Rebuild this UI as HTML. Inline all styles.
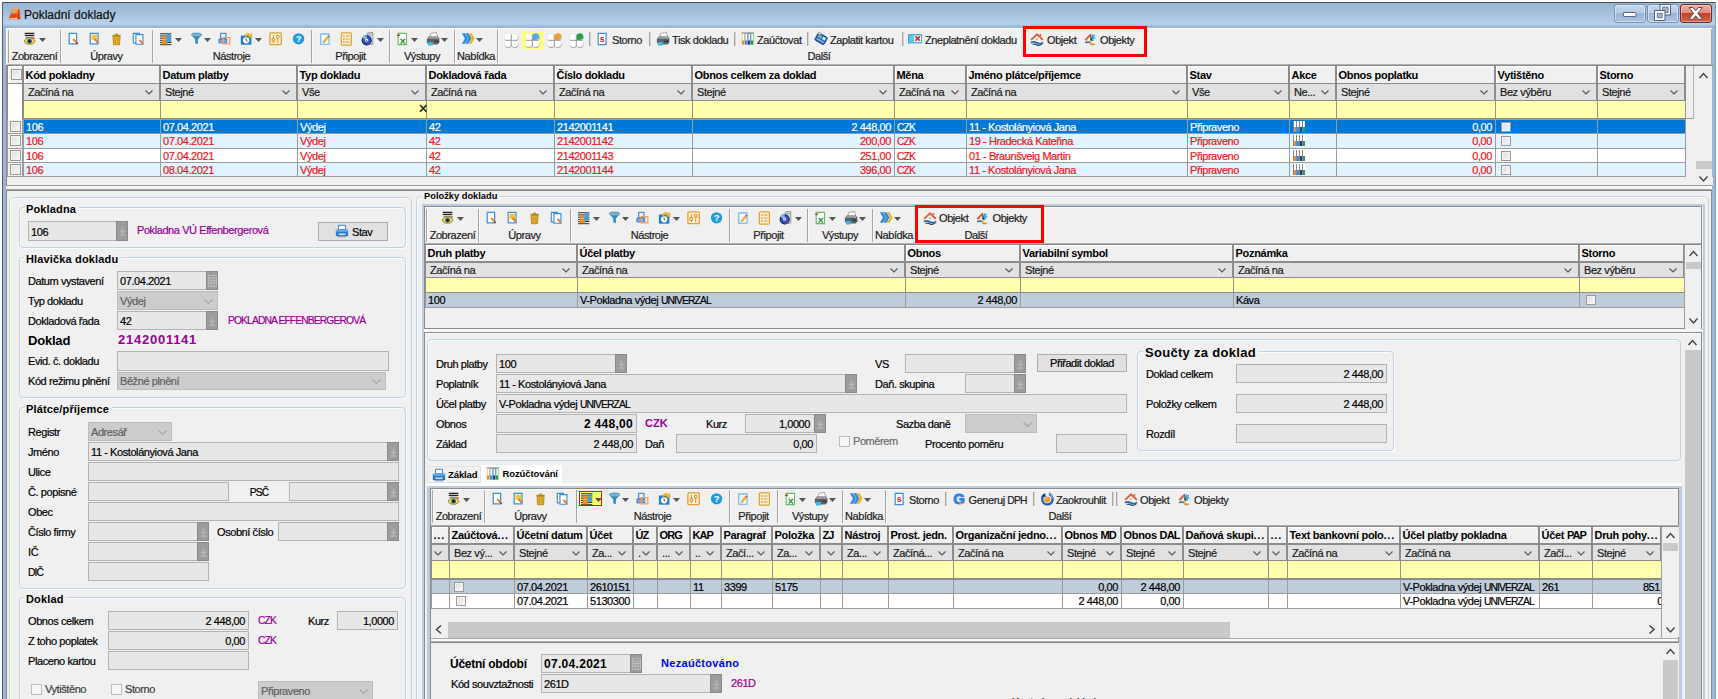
<!DOCTYPE html>
<html lang="cs"><head><meta charset="utf-8"><title>Pokladní doklady</title>
<style>
html,body{margin:0;padding:0;background:#fff;}
body{width:1718px;height:699px;overflow:hidden;position:relative;font-family:"Liberation Sans","DejaVu Sans",sans-serif;font-size:11px;color:#000;}
#win{position:absolute;left:0;top:0;width:1718px;height:699px;overflow:hidden;}
#win div{position:absolute;box-sizing:border-box;white-space:nowrap;}
#win svg{position:absolute;overflow:visible;}
.t{font-size:11px;letter-spacing:-0.42px;color:#000;-webkit-text-stroke:0.2px;}
.b{font-size:11px;font-weight:bold;letter-spacing:-0.3px;color:#000;}
.fld{background:#e6e6e6;border:1px solid #b4b4b4;}
.hd{background:#f0f0f0;}

</style></head><body>
<div id="win">
<div style="left:2px;top:2px;width:1714px;height:700px;background:#9ab5d5;"></div>
<div style="left:2px;top:2px;width:1714px;height:26px;background:linear-gradient(#98b4d1 0%,#a3bedb 40%,#b9d1ea 80%,#b5cee8 86%,#9ab5d5 94%);"></div>
<div style="left:2px;top:2px;width:1714px;height:1px;background:#4a4f55;"></div>
<div style="left:2px;top:2px;width:1px;height:700px;background:#5a6068;"></div>
<div style="left:1715px;top:2px;width:1px;height:700px;background:#8a9db2;"></div>
<svg style="left:8.5px;top:7.5px" width="12" height="12" viewBox="0 0 12 12"><linearGradient id="tg" x1="0" y1="0" x2="0" y2="1"><stop offset="0" stop-color="#f6a860"/><stop offset=".55" stop-color="#f58a3a"/><stop offset="1" stop-color="#ee4a18"/></linearGradient><path d="M3.300 .300h6l1 1.200v5.500h-8.500v-3.500z" fill="url(#tg)"/><path d="M2.600 3.200l4.200-.800.300 1.600-4.300.900z" fill="#a9c4ac"/><path d="M.300 8.800l1.500-2.300h8.500l1 2.500-.300 2.300h-10.400z" fill="#e6431a"/><path d="M1.500 9.800l3 .800 3.500-1.300v2h-6.500z" fill="#f8dfa0"/><path d="M8.800 1l1.800.800.700 9-2 .500z" fill="#cf3c1c" opacity=".85"/></svg>
<div class="t" style="left:24px;top:7px;line-height:16px;height:16px;font-size:12px;letter-spacing:0;color:#101010;">Pokladní doklady</div>
<div style="left:1614px;top:4px;width:32px;height:19px;border:1px solid #7e93ad;border-radius:3px;background:linear-gradient(#c4d8ee 0%,#b4cbe6 48%,#9bb7d6 50%,#a9c3e0 100%);box-shadow:inset 0 0 0 1px rgba(255,255,255,.45);"></div>
<div style="left:1647px;top:4px;width:32px;height:19px;border:1px solid #7e93ad;border-radius:3px;background:linear-gradient(#c4d8ee 0%,#b4cbe6 48%,#9bb7d6 50%,#a9c3e0 100%);box-shadow:inset 0 0 0 1px rgba(255,255,255,.45);"></div>
<div style="left:1680px;top:4px;width:32px;height:19px;border:1px solid #6e2a2a;border-radius:3px;background:linear-gradient(#f0aa9c 0%,#e08c7c 48%,#c0412a 50%,#d0664c 100%);box-shadow:inset 0 0 0 1px rgba(255,255,255,.35);"></div>
<svg style="left:1623px;top:12px" width="14" height="5" viewBox="0 0 14 5"><rect x=".5" y=".5" width="12.500" height="4" rx=".5" fill="#fff" stroke="#5a6a80" stroke-width="1"/></svg>
<svg style="left:1653px;top:3px" width="20" height="19" viewBox="0 0 20 19"><path d="M7 1.500h10.500v10.500h-10.500z" fill="#fff" stroke="#52617a" stroke-width="1"/><path d="M9.500 4h5.500v5.500h-5.500z" fill="#9db9d8" stroke="#52617a" stroke-width=".8"/><path d="M1.500 7.500h10.500v10h-10.500z" fill="#fff" stroke="#52617a" stroke-width="1"/><path d="M4.300 10.300h4.900v4.400h-4.900z" fill="#9db9d8" stroke="#52617a" stroke-width=".8"/></svg>
<svg style="left:1688px;top:6px" width="16" height="15" viewBox="0 0 16 15"><path d="M1 1.500h4l2.700 3.300 2.700-3.300h4l-4.600 5.800 4.600 5.900h-4l-2.700-3.400-2.700 3.400h-4l4.600-5.900z" fill="#fff" stroke="#6a4a50" stroke-width="1" stroke-linejoin="round"/></svg>
<div style="left:6px;top:28px;width:1706px;height:672px;background:#f0f0f0;"></div>
<div style="left:6px;top:28px;width:1px;height:672px;background:#fafafa;"></div>
<div style="left:6px;top:28px;width:1706px;height:1px;background:#fbfbfb;"></div>
<div style="left:8px;top:30px;width:1px;height:33px;background:#a5a5a5;"></div>
<div style="left:9px;top:30px;width:1px;height:33px;background:#fafafa;"></div>
<svg style="left:23px;top:32px" width="14" height="14" viewBox="0 0 16 16"><path d="M2 1.5h11M2 3.8h11" stroke="#222" stroke-width="1.3"/><path d="M3 6h9" stroke="#555" stroke-width="1"/><ellipse cx="7.5" cy="10.5" rx="6" ry="3.6" fill="#e9d36a" stroke="#9a7d1c" stroke-width="1"/><circle cx="7.5" cy="10.6" r="2.6" fill="#1d4f7a"/><circle cx="7.5" cy="10.6" r="1.1" fill="#0a1a28"/><path d="M11.5 7.5l2-1" stroke="#b33" stroke-width="1.2"/></svg>
<svg style="left:39px;top:38px" width="7" height="4" viewBox="0 0 7 4"><path d="M0 0h7L3.5 4z" fill="#555"/></svg>
<div class="t" style="left:-15.5px;top:49px;line-height:14px;height:14px;width:100px;text-align:center;color:#1c1c1c;">Zobrazení</div>
<div style="left:60px;top:30px;width:1px;height:33px;background:#a5a5a5;"></div>
<div style="left:61px;top:30px;width:1px;height:33px;background:#fafafa;"></div>
<svg style="left:67px;top:32px" width="14" height="14" viewBox="0 0 16 16"><path d="M2.5 1.5h8.5v12h-8.5z" fill="#fff" stroke="#3b8fd6" stroke-width="1.4"/><path d="M7 8l4.5 4.8" stroke="#e8742a" stroke-width="2"/><path d="M10.8 12l1.4 1.6" stroke="#8a3a10" stroke-width="1.6"/></svg>
<svg style="left:87.5px;top:32px" width="14" height="14" viewBox="0 0 16 16"><path d="M2.5 1.5h9v12h-9z" fill="#fff" stroke="#3b8fd6" stroke-width="1.4"/><path d="M4 3h6.5v6h-6.5z" fill="#f6c433"/><path d="M7.5 8l4 4.5" stroke="#e8742a" stroke-width="2.2"/></svg>
<svg style="left:110px;top:32px" width="14" height="14" viewBox="0 0 16 16"><path d="M3.5 5h8l-.6 9.5h-6.8z" fill="#e3ae2d" stroke="#b58417" stroke-width="1"/><path d="M2.8 4h9.4" stroke="#b58417" stroke-width="1.6"/><path d="M6 2.5h3" stroke="#b58417" stroke-width="1.4"/><path d="M6 7v6M9 7v6" stroke="#c6931f" stroke-width="1"/></svg>
<svg style="left:132px;top:32px" width="14" height="14" viewBox="0 0 16 16"><path d="M1.5 1.5h7v11h-7z" fill="#fff" stroke="#3b8fd6" stroke-width="1.3"/><path d="M4.5 3h8v11h-8z" fill="#fff" stroke="#3b8fd6" stroke-width="1.3"/><path d="M8.5 9l4 4.6" stroke="#e8742a" stroke-width="2"/></svg>
<div class="t" style="left:56.5px;top:49px;line-height:14px;height:14px;width:100px;text-align:center;color:#1c1c1c;">Úpravy</div>
<div style="left:152px;top:30px;width:1px;height:33px;background:#a5a5a5;"></div>
<div style="left:153px;top:30px;width:1px;height:33px;background:#fafafa;"></div>
<svg style="left:160px;top:32px" width="14" height="14" viewBox="0 0 16 16"><path d="M0 2h13M0 4.5h13M0 7h13M0 9.5h13M0 12h13M0 14.5h13" stroke="#222" stroke-width="1.1"/><circle cx="5" cy="6.5" r="2" fill="#f28c28"/><path d="M1.5 14c0-4 1.5-5.5 3.5-5.5s3.5 1.5 3.5 5.5z" fill="#f28c28"/><circle cx="10" cy="3.2" r="1.9" fill="#3aa0e0"/><path d="M7.2 11c0-4 1.2-5.6 2.8-5.6s2.8 1.6 2.8 5.600z" fill="#3aa0e0"/></svg>
<svg style="left:175px;top:38px" width="7" height="4" viewBox="0 0 7 4"><path d="M0 0h7L3.5 4z" fill="#555"/></svg>
<svg style="left:190px;top:32px" width="14" height="14" viewBox="0 0 16 16"><path d="M1.500 3h12l-4.500 5.500v5.500l-3-1.200v-4.300z" fill="#2f8ad1"/><ellipse cx="7.500" cy="3" rx="6" ry="1.800" fill="#6db8ea" stroke="#2a78b8" stroke-width=".8"/><path d="M3 3.800c3 1 6 1 9 0" stroke="#e8c040" stroke-width=".8" fill="none"/></svg>
<svg style="left:204px;top:38px" width="7" height="4" viewBox="0 0 7 4"><path d="M0 0h7L3.5 4z" fill="#555"/></svg>
<svg style="left:218px;top:32px" width="14" height="14" viewBox="0 0 16 16"><path d="M3 1.500h6v6h-6z" fill="none" stroke="#5b8fd0" stroke-width="1.5"/><path d="M1 8h9v4.500h-9z" fill="#7fa6dc" stroke="#4a78ba" stroke-width="1"/><path d="M6 6.500h7.500v7h-7.500z" fill="none" stroke="#f0a060" stroke-width="1.500"/></svg>
<svg style="left:240px;top:32px" width="14" height="14" viewBox="0 0 16 16"><path d="M1 4h12v10.500h-12z" fill="#1f7fd0"/><circle cx="7" cy="9.500" r="3.600" fill="#fff"/><path d="M7 7.500v2.200l1.600 1" stroke="#333" stroke-width="1" fill="none"/><path d="M5 4.500c1-3 5-4 7-1.500l1.500-1v4.500h-4.500l1.500-1.500c-1.500-1.500-3.500-1-4 1z" fill="#f5b921" stroke="#c98a10" stroke-width=".5"/></svg>
<svg style="left:255px;top:38px" width="7" height="4" viewBox="0 0 7 4"><path d="M0 0h7L3.5 4z" fill="#555"/></svg>
<svg style="left:269px;top:32px" width="14" height="14" viewBox="0 0 16 16"><rect x="1" y="1" width="13" height="13.500" rx="1.500" fill="#fdf3dc" stroke="#e0a030" stroke-width="1.500"/><path d="M5 3.500v9M10 3.500v9" stroke="#d8952a" stroke-width="1.200"/><circle cx="5" cy="9" r="1.700" fill="#fdf3dc" stroke="#d8952a" stroke-width="1.200"/><circle cx="10" cy="5.500" r="1.700" fill="#fdf3dc" stroke="#d8952a" stroke-width="1.200"/></svg>
<svg style="left:292px;top:32px" width="14" height="14" viewBox="0 0 16 16"><circle cx="7.500" cy="7.800" r="6.500" fill="#1e9be0"/><text x="7.500" y="11.600" font-size="11" font-weight="bold" text-anchor="middle" fill="#fff" font-family="Liberation Sans,sans-serif">?</text></svg>
<div class="t" style="left:181.5px;top:49px;line-height:14px;height:14px;width:100px;text-align:center;color:#1c1c1c;">Nástroje</div>
<div style="left:311px;top:30px;width:1px;height:33px;background:#a5a5a5;"></div>
<div style="left:312px;top:30px;width:1px;height:33px;background:#fafafa;"></div>
<svg style="left:319px;top:32px" width="14" height="14" viewBox="0 0 16 16"><path d="M2 2h9.500v12h-9.500z" fill="#f4f9ff" stroke="#6fb0ea" stroke-width="1.300"/><path d="M2 2.500h9.500" stroke="#9cc8f0" stroke-width="1.500"/><path d="M5 10.500l5-6 1.500 1.200-5 6-2 .8z" fill="#f3b13a" stroke="#c6831a" stroke-width=".5"/><path d="M10 4.500l1.500 1.200" stroke="#d8452a" stroke-width="1.500"/></svg>
<svg style="left:340px;top:32px" width="14" height="14" viewBox="0 0 16 16"><rect x="1.500" y="1" width="11.500" height="14" rx="1.200" fill="#fdf3dc" stroke="#e0a030" stroke-width="1.400"/><path d="M6.500 4.500h4.500M6.500 8h4.500M6.500 11.500h4.500" stroke="#d8952a" stroke-width="1.200"/><path d="M3.500 4.500h1.800M3.500 8h1.800M3.500 11.500h1.800" stroke="#d8952a" stroke-width="1.600"/></svg>
<svg style="left:361px;top:32px" width="14" height="14" viewBox="0 0 16 16"><path d="M7 1.500l2.500-1h4v13.500h-6.500z" fill="#d9d9d9" stroke="#8a8a8a" stroke-width=".9"/><path d="M9.500 .500v2.500h4" fill="none" stroke="#8a8a8a" stroke-width=".7"/><circle cx="6.500" cy="9.500" r="5.800" fill="#14286e"/><circle cx="6.500" cy="9.500" r="4.300" fill="#2a5fc8"/><path d="M6.500 9.500l-5-2.800a5.800 5.800 0 0 1 5-3z" fill="#8fb4f0"/><path d="M6.500 9.500l5 2.800a5.800 5.800 0 0 1-5 3z" fill="#5b3fb0"/><circle cx="6.500" cy="9.500" r="1.700" fill="#eef2fc"/><circle cx="6.500" cy="9.500" r=".700" fill="#555"/></svg>
<svg style="left:377px;top:38px" width="7" height="4" viewBox="0 0 7 4"><path d="M0 0h7L3.5 4z" fill="#555"/></svg>
<div class="t" style="left:300.5px;top:49px;line-height:14px;height:14px;width:100px;text-align:center;color:#1c1c1c;">Připojit</div>
<div style="left:389px;top:30px;width:1px;height:33px;background:#a5a5a5;"></div>
<div style="left:390px;top:30px;width:1px;height:33px;background:#fafafa;"></div>
<svg style="left:396px;top:32px" width="14" height="14" viewBox="0 0 16 16"><path d="M2.500 1.500h9.500v13h-9.500z" fill="#f6fbf4" stroke="#6ab868" stroke-width="1.300"/><path d="M7 2.500h4v5h-4z" fill="#fff"/><path d="M1.300 3.800h3.200" stroke="#d03030" stroke-width="1.700"/><path d="M5.300 7.800l5 5.500M10.300 7.800l-5 5.500" stroke="#2e8a3e" stroke-width="1.500"/></svg>
<svg style="left:411px;top:38px" width="7" height="4" viewBox="0 0 7 4"><path d="M0 0h7L3.5 4z" fill="#555"/></svg>
<svg style="left:426px;top:32px" width="14" height="14" viewBox="0 0 16 16"><path d="M5.500 1.500l6.500-1 1.500 5.500h-9.500z" fill="#fbfbfb" stroke="#8a8a8a" stroke-width=".8"/><path d="M1 8l2.500-3h10l1.800 2.500v4.500l-2 2.300h-10.300l-2-2.300z" fill="#5a6068"/><path d="M2 8l2-2.300h9l1.300 1.800z" fill="#9aa0a8"/><path d="M2.500 11l6 .800-1.200 3.700h-5.300z" fill="#38b6e8"/><path d="M9.500 10.500h4.800" stroke="#2a2e33" stroke-width="1.400"/><path d="M11 5.500l3 2.500" stroke="#c8ccd0" stroke-width=".8"/></svg>
<svg style="left:441px;top:38px" width="7" height="4" viewBox="0 0 7 4"><path d="M0 0h7L3.5 4z" fill="#555"/></svg>
<div class="t" style="left:372px;top:49px;line-height:14px;height:14px;width:100px;text-align:center;color:#1c1c1c;">Výstupy</div>
<div style="left:454px;top:30px;width:1px;height:33px;background:#a5a5a5;"></div>
<div style="left:455px;top:30px;width:1px;height:33px;background:#fafafa;"></div>
<svg style="left:461px;top:32px" width="14" height="14" viewBox="0 0 16 16"><path d="M1 1.500h3.500l3.500 6-3.500 6h-3.500l3.500-6z" fill="#2f8ad8"/><path d="M5 1.500h3.500l3.500 6-3.500 6h-3.500l3.500-6z" fill="#2f8ad8"/><path d="M9 1.500h3l3.500 6-3.500 6h-3l3.500-6z" fill="#f2b21c"/></svg>
<svg style="left:476px;top:38px" width="7" height="4" viewBox="0 0 7 4"><path d="M0 0h7L3.5 4z" fill="#555"/></svg>
<div class="t" style="left:426px;top:49px;line-height:14px;height:14px;width:100px;text-align:center;color:#1c1c1c;">Nabídka</div>
<div style="left:497px;top:30px;width:1px;height:33px;background:#a5a5a5;"></div>
<div style="left:498px;top:30px;width:1px;height:33px;background:#fafafa;"></div>
<div style="left:1711px;top:29px;width:1px;height:35px;background:#a8a8a8;"></div>
<div style="left:522px;top:31px;width:22px;height:18px;background:#ffff80;"></div>
<svg style="left:504px;top:32.5px" width="15" height="15" viewBox="0 0 15 15"><g fill="#a8a8a8" stroke="#a8a8a8" stroke-width=".8" transform="translate(.3 .8)"><circle cx="4" cy="4" r="3.300"/><circle cx="10.600" cy="4" r="3.300"/><circle cx="4" cy="10.600" r="3.300"/><circle cx="10.600" cy="10.600" r="3.300"/><path d="M4 4h6.600v6.600h-6.600z"/></g><g fill="#fff" stroke="#d2d2d2" stroke-width=".5"><circle cx="4" cy="4" r="3.300"/><circle cx="10.600" cy="4" r="3.300"/><circle cx="4" cy="10.600" r="3.300"/><circle cx="10.600" cy="10.600" r="3.300"/><path d="M4 4h6.600v6.600h-6.600z"/></g><g fill="#fff"><circle cx="4" cy="4" r="3.300"/><circle cx="10.600" cy="4" r="3.300"/><circle cx="4" cy="10.600" r="3.300"/><circle cx="10.600" cy="10.600" r="3.300"/><path d="M4 4h6.600v6.600h-6.600z"/></g><path d="M7.300 1.500v11.600M1.500 7.300h11.600" stroke="#8e8e8e" stroke-width=".9"/></svg>
<svg style="left:525px;top:32.5px" width="15" height="15" viewBox="0 0 15 15"><g fill="#a8a8a8" stroke="#a8a8a8" stroke-width=".8" transform="translate(.3 .8)"><circle cx="4" cy="4" r="3.300"/><circle cx="10.600" cy="4" r="3.300"/><circle cx="4" cy="10.600" r="3.300"/><circle cx="10.600" cy="10.600" r="3.300"/><path d="M4 4h6.600v6.600h-6.600z"/></g><g fill="#fff" stroke="#d2d2d2" stroke-width=".5"><circle cx="4" cy="4" r="3.300"/><circle cx="10.600" cy="4" r="3.300"/><circle cx="4" cy="10.600" r="3.300"/><circle cx="10.600" cy="10.600" r="3.300"/><path d="M4 4h6.600v6.600h-6.600z"/></g><g fill="#fff"><circle cx="4" cy="4" r="3.300"/><circle cx="10.600" cy="4" r="3.300"/><circle cx="4" cy="10.600" r="3.300"/><circle cx="10.600" cy="10.600" r="3.300"/><path d="M4 4h6.600v6.600h-6.600z"/></g><path d="M7.700 6.900v-3.400a3.300 3.300 0 1 1 3.400 3.400z" fill="#58a8f0"/><path d="M7.300 1.500v11.600M1.500 7.300h11.600" stroke="#8e8e8e" stroke-width=".9"/></svg>
<svg style="left:547px;top:32.5px" width="15" height="15" viewBox="0 0 15 15"><g fill="#a8a8a8" stroke="#a8a8a8" stroke-width=".8" transform="translate(.3 .8)"><circle cx="4" cy="4" r="3.300"/><circle cx="10.600" cy="4" r="3.300"/><circle cx="4" cy="10.600" r="3.300"/><circle cx="10.600" cy="10.600" r="3.300"/><path d="M4 4h6.600v6.600h-6.600z"/></g><g fill="#fff" stroke="#d2d2d2" stroke-width=".5"><circle cx="4" cy="4" r="3.300"/><circle cx="10.600" cy="4" r="3.300"/><circle cx="4" cy="10.600" r="3.300"/><circle cx="10.600" cy="10.600" r="3.300"/><path d="M4 4h6.600v6.600h-6.600z"/></g><g fill="#fff"><circle cx="4" cy="4" r="3.300"/><circle cx="10.600" cy="4" r="3.300"/><circle cx="4" cy="10.600" r="3.300"/><circle cx="10.600" cy="10.600" r="3.300"/><path d="M4 4h6.600v6.600h-6.600z"/></g><path d="M7.700 6.900v-3.400a3.300 3.300 0 1 1 3.400 3.400z" fill="#f59a2a"/><path d="M7.300 1.500v11.600M1.500 7.300h11.600" stroke="#8e8e8e" stroke-width=".9"/></svg>
<svg style="left:569px;top:32.5px" width="15" height="15" viewBox="0 0 15 15"><g fill="#a8a8a8" stroke="#a8a8a8" stroke-width=".8" transform="translate(.3 .8)"><circle cx="4" cy="4" r="3.300"/><circle cx="10.600" cy="4" r="3.300"/><circle cx="4" cy="10.600" r="3.300"/><circle cx="10.600" cy="10.600" r="3.300"/><path d="M4 4h6.600v6.600h-6.600z"/></g><g fill="#fff" stroke="#d2d2d2" stroke-width=".5"><circle cx="4" cy="4" r="3.300"/><circle cx="10.600" cy="4" r="3.300"/><circle cx="4" cy="10.600" r="3.300"/><circle cx="10.600" cy="10.600" r="3.300"/><path d="M4 4h6.600v6.600h-6.600z"/></g><g fill="#fff"><circle cx="4" cy="4" r="3.300"/><circle cx="10.600" cy="4" r="3.300"/><circle cx="4" cy="10.600" r="3.300"/><circle cx="10.600" cy="10.600" r="3.300"/><path d="M4 4h6.600v6.600h-6.600z"/></g><path d="M7.700 6.900v-3.400a3.300 3.300 0 1 1 3.400 3.400z" fill="#28a048"/><path d="M7.300 1.500v11.600M1.500 7.300h11.600" stroke="#8e8e8e" stroke-width=".9"/></svg>
<div style="left:589px;top:32px;width:1px;height:14px;background:#a6a6a6;"></div>
<div style="left:590px;top:32px;width:1px;height:14px;background:#d4d4d4;"></div>
<svg style="left:596px;top:32px" width="14" height="14" viewBox="0 0 16 16"><path d="M2.500 1.500h9v13h-9z" fill="#fff" stroke="#3b8fd6" stroke-width="1.400"/><text x="7" y="11.500" font-size="10" font-weight="bold" text-anchor="middle" fill="#c8202a" font-family="Liberation Sans,sans-serif">s</text></svg>
<div class="t" style="left:612px;top:32.5px;line-height:14px;height:14px;color:#1c1c1c;">Storno</div>
<div style="left:649px;top:32px;width:1px;height:14px;background:#a6a6a6;"></div>
<div style="left:650px;top:32px;width:1px;height:14px;background:#d4d4d4;"></div>
<svg style="left:656px;top:32px" width="14" height="14" viewBox="0 0 16 16"><path d="M5.500 1.500l6.500-1 1.500 5.500h-9.500z" fill="#fbfbfb" stroke="#8a8a8a" stroke-width=".8"/><path d="M1 8l2.500-3h10l1.800 2.500v4.500l-2 2.300h-10.300l-2-2.300z" fill="#5a6068"/><path d="M2 8l2-2.300h9l1.300 1.800z" fill="#9aa0a8"/><path d="M2.500 11l6 .800-1.200 3.700h-5.300z" fill="#38b6e8"/><path d="M9.500 10.500h4.800" stroke="#2a2e33" stroke-width="1.400"/><path d="M11 5.500l3 2.500" stroke="#c8ccd0" stroke-width=".8"/></svg>
<div class="t" style="left:672px;top:32.5px;line-height:14px;height:14px;color:#1c1c1c;">Tisk dokladu</div>
<div style="left:734px;top:32px;width:1px;height:14px;background:#a6a6a6;"></div>
<div style="left:735px;top:32px;width:1px;height:14px;background:#d4d4d4;"></div>
<svg style="left:741px;top:32px" width="14" height="14" viewBox="0 0 16 16"><path d="M1 1h3v13.500h-3z" fill="#f08a24"/><path d="M4.400 1h3v13.500h-3z" fill="#3a8ee0"/><path d="M7.800 1h3v13.500h-3z" fill="#1b3f8a"/><path d="M11.200 1h3v13.500h-3z" fill="#2f9a44"/><path d="M1.600 1.600h1.800v8h-1.800zM5 1.600h1.800v8h-1.800zM8.400 1.600h1.800v8h-1.800zM11.800 1.600h1.800v8h-1.800z" fill="#fff"/><path d="M.5 .8h14.500" stroke="#888" stroke-width=".8"/></svg>
<div class="t" style="left:757px;top:32.5px;line-height:14px;height:14px;color:#1c1c1c;">Zaúčtovat</div>
<div style="left:807px;top:32px;width:1px;height:14px;background:#a6a6a6;"></div>
<div style="left:808px;top:32px;width:1px;height:14px;background:#d4d4d4;"></div>
<svg style="left:814px;top:32px" width="14" height="14" viewBox="0 0 16 16"><g transform="rotate(30 8 8)"><rect x="2" y="3" width="12" height="9.500" rx="1.500" fill="#2f6fc4" stroke="#1b3f7a" stroke-width="1"/><rect x="3.500" y="4.500" width="4" height="3" fill="#6fd06a"/><rect x="9" y="4.500" width="3.500" height="3" fill="#e8eef8"/><path d="M3.500 10h9" stroke="#9ec2f0" stroke-width="1.200"/></g><path d="M3 2l4-1.500 2 2" fill="#f4f4f4" stroke="#888" stroke-width=".8"/></svg>
<div class="t" style="left:830px;top:32.5px;line-height:14px;height:14px;color:#1c1c1c;">Zaplatit kartou</div>
<div style="left:902px;top:32px;width:1px;height:14px;background:#a6a6a6;"></div>
<div style="left:903px;top:32px;width:1px;height:14px;background:#d4d4d4;"></div>
<svg style="left:908px;top:32px" width="14" height="14" viewBox="0 0 16 16"><rect x=".5" y="3" width="15" height="9.500" fill="#5fc8ee" stroke="#3a9ccc" stroke-width="1"/><rect x="7" y="4" width="8" height="7.500" fill="#e8f6fc"/><path d="M8.500 5l5 5M13.500 5l-5 5" stroke="#e0202a" stroke-width="1.800"/></svg>
<div class="t" style="left:925px;top:32.5px;line-height:14px;height:14px;color:#1c1c1c;">Zneplatnění dokladu</div>
<svg style="left:1030px;top:32px" width="14" height="14" viewBox="0 0 16 16"><path d="M4 8.500l4-3.800 4 3.800v3h-8z" fill="#f6f1ee"/><path d="M7 7.500h2v2h-2z" fill="#b9b4c4"/><path d="M1.300 9l6.700-6.300 6.700 6.300" fill="none" stroke="#e0603a" stroke-width="2.300" stroke-linejoin="miter"/><path d="M11 2.200h1.800v3.300l-1.800-1.700z" fill="#e0603a"/><path d="M1 12.300c2.500-1.800 4.500-1.300 6.500 0s4.500 1.800 7.500-.5" fill="none" stroke="#2a6aa8" stroke-width="1.900"/><path d="M3 14.300c2-.8 3.500-.3 5 .5s4 .5 6-1.200" fill="none" stroke="#1d4a74" stroke-width="1.400"/></svg>
<div class="t" style="left:1047px;top:32.5px;line-height:14px;height:14px;color:#1c1c1c;">Objekt</div>
<svg style="left:1084px;top:32px" width="14" height="14" viewBox="0 0 16 16"><path d="M1.500 9.500l6-6.500" fill="none" stroke="#e0603a" stroke-width="2.400"/><path d="M4.500 9l3.500-3.500v4.500z" fill="#f0ece8"/><path d="M7.300 1.500l2.700 8.500h-2.700z" fill="#2a2a2a"/><path d="M9 1l1.200 2.500 2.800-.5-1.500 2.500 2.500 2-3 .300.500 2.700-2.700-2z" fill="#2fb0e0"/><path d="M1.500 12.500c2-1.500 4-1.200 6-.2" fill="none" stroke="#2a5fa8" stroke-width="1.800"/><path d="M8 9.500c.5 3 2.500 4.500 5.500 3.500-1.500 2.500-6 2.500-7-1z" fill="#f0b83a"/><path d="M7 13.800c1.500 1 3.500 1.200 5 .2" fill="none" stroke="#d0602a" stroke-width="1"/></svg>
<div class="t" style="left:1100px;top:32.5px;line-height:14px;height:14px;color:#1c1c1c;">Objekty</div>
<div class="t" style="left:769px;top:49px;line-height:14px;height:14px;width:100px;text-align:center;color:#1c1c1c;">Další</div>
<div style="left:1023px;top:26px;width:124px;height:31px;border:3px solid #ff0000;"></div>
<div style="left:7px;top:64px;width:1706px;height:2px;background:linear-gradient(#c8c8c8,#707070);"></div>
<div style="left:7px;top:66px;width:1687px;height:54px;background:#8c8c8c;"></div>
<div style="left:7px;top:119px;width:1680px;height:59px;background:#9c9c9c;"></div>
<div style="left:1686px;top:120px;width:9px;height:58px;background:#f0f0f0;"></div>
<div style="left:8px;top:66px;width:14px;height:17px;background:#f0f0f0;border-left:1px solid #fff;border-top:1px solid #fff;overflow:hidden;"></div>
<div style="left:11px;top:69px;width:11px;height:11px;background:linear-gradient(135deg,#dcdcdc,#fafafa);border:1px solid #999a9a;box-shadow:inset 0 0 0 1px #f4f4f4;"></div>
<div style="left:8px;top:84px;width:14px;height:36px;background:#fff;"></div>
<div style="left:24px;top:66px;width:135px;height:17px;background:#f0f0f0;border-left:1px solid #fff;border-top:1px solid #fff;overflow:hidden;"></div>
<div class="b" style="left:25.5px;top:67.5px;line-height:14px;height:14px;">Kód pokladny</div>
<div style="left:24px;top:84px;width:135px;height:16px;background:#e1e1e1;overflow:hidden;"></div>
<div class="t" style="left:28px;top:85px;line-height:14px;height:14px;color:#1a1a1a;">Začíná na</div>
<svg style="left:145px;top:90.0px" width="8" height="5" viewBox="0 0 8 5"><path d="M.5 .5L4.0 4L7.5 .5" fill="none" stroke="#555" stroke-width="1.1"/></svg>
<div style="left:24px;top:101px;width:137px;height:17px;background:#ffffb0;border-right:1px solid #949494;"></div>
<div style="left:161px;top:66px;width:135px;height:17px;background:#f0f0f0;border-left:1px solid #fff;border-top:1px solid #fff;overflow:hidden;"></div>
<div class="b" style="left:162.5px;top:67.5px;line-height:14px;height:14px;">Datum platby</div>
<div style="left:161px;top:84px;width:135px;height:16px;background:#e1e1e1;overflow:hidden;"></div>
<div class="t" style="left:165px;top:85px;line-height:14px;height:14px;color:#1a1a1a;">Stejné</div>
<svg style="left:282px;top:90.0px" width="8" height="5" viewBox="0 0 8 5"><path d="M.5 .5L4.0 4L7.5 .5" fill="none" stroke="#555" stroke-width="1.1"/></svg>
<div style="left:161px;top:101px;width:137px;height:17px;background:#ffffb0;border-right:1px solid #949494;"></div>
<div style="left:298px;top:66px;width:127px;height:17px;background:#f0f0f0;border-left:1px solid #fff;border-top:1px solid #fff;overflow:hidden;"></div>
<div class="b" style="left:299.5px;top:67.5px;line-height:14px;height:14px;">Typ dokladu</div>
<div style="left:298px;top:84px;width:127px;height:16px;background:#e1e1e1;overflow:hidden;"></div>
<div class="t" style="left:302px;top:85px;line-height:14px;height:14px;color:#1a1a1a;">Vše</div>
<svg style="left:411px;top:90.0px" width="8" height="5" viewBox="0 0 8 5"><path d="M.5 .5L4.0 4L7.5 .5" fill="none" stroke="#555" stroke-width="1.1"/></svg>
<div style="left:298px;top:101px;width:129px;height:17px;background:#ffffb0;border-right:1px solid #949494;"></div>
<div style="left:427px;top:66px;width:126px;height:17px;background:#f0f0f0;border-left:1px solid #fff;border-top:1px solid #fff;overflow:hidden;"></div>
<div class="b" style="left:428.5px;top:67.5px;line-height:14px;height:14px;">Dokladová řada</div>
<div style="left:427px;top:84px;width:126px;height:16px;background:#e1e1e1;overflow:hidden;"></div>
<div class="t" style="left:431px;top:85px;line-height:14px;height:14px;color:#1a1a1a;">Začíná na</div>
<svg style="left:539px;top:90.0px" width="8" height="5" viewBox="0 0 8 5"><path d="M.5 .5L4.0 4L7.5 .5" fill="none" stroke="#555" stroke-width="1.1"/></svg>
<div style="left:427px;top:101px;width:128px;height:17px;background:#ffffb0;border-right:1px solid #949494;"></div>
<div style="left:555px;top:66px;width:136px;height:17px;background:#f0f0f0;border-left:1px solid #fff;border-top:1px solid #fff;overflow:hidden;"></div>
<div class="b" style="left:556.5px;top:67.5px;line-height:14px;height:14px;">Číslo dokladu</div>
<div style="left:555px;top:84px;width:136px;height:16px;background:#e1e1e1;overflow:hidden;"></div>
<div class="t" style="left:559px;top:85px;line-height:14px;height:14px;color:#1a1a1a;">Začíná na</div>
<svg style="left:677px;top:90.0px" width="8" height="5" viewBox="0 0 8 5"><path d="M.5 .5L4.0 4L7.5 .5" fill="none" stroke="#555" stroke-width="1.1"/></svg>
<div style="left:555px;top:101px;width:138px;height:17px;background:#ffffb0;border-right:1px solid #949494;"></div>
<div style="left:693px;top:66px;width:200px;height:17px;background:#f0f0f0;border-left:1px solid #fff;border-top:1px solid #fff;overflow:hidden;"></div>
<div class="b" style="left:694.5px;top:67.5px;line-height:14px;height:14px;">Obnos celkem za doklad</div>
<div style="left:693px;top:84px;width:200px;height:16px;background:#e1e1e1;overflow:hidden;"></div>
<div class="t" style="left:697px;top:85px;line-height:14px;height:14px;color:#1a1a1a;">Stejné</div>
<svg style="left:879px;top:90.0px" width="8" height="5" viewBox="0 0 8 5"><path d="M.5 .5L4.0 4L7.5 .5" fill="none" stroke="#555" stroke-width="1.1"/></svg>
<div style="left:693px;top:101px;width:202px;height:17px;background:#ffffb0;border-right:1px solid #949494;"></div>
<div style="left:895px;top:66px;width:70px;height:17px;background:#f0f0f0;border-left:1px solid #fff;border-top:1px solid #fff;overflow:hidden;"></div>
<div class="b" style="left:896.5px;top:67.5px;line-height:14px;height:14px;">Měna</div>
<div style="left:895px;top:84px;width:70px;height:16px;background:#e1e1e1;overflow:hidden;"></div>
<div class="t" style="left:899px;top:85px;line-height:14px;height:14px;color:#1a1a1a;">Začíná na</div>
<svg style="left:951px;top:90.0px" width="8" height="5" viewBox="0 0 8 5"><path d="M.5 .5L4.0 4L7.5 .5" fill="none" stroke="#555" stroke-width="1.1"/></svg>
<div style="left:895px;top:101px;width:72px;height:17px;background:#ffffb0;border-right:1px solid #949494;"></div>
<div style="left:967px;top:66px;width:219px;height:17px;background:#f0f0f0;border-left:1px solid #fff;border-top:1px solid #fff;overflow:hidden;"></div>
<div class="b" style="left:968.5px;top:67.5px;line-height:14px;height:14px;">Jméno plátce/příjemce</div>
<div style="left:967px;top:84px;width:219px;height:16px;background:#e1e1e1;overflow:hidden;"></div>
<div class="t" style="left:971px;top:85px;line-height:14px;height:14px;color:#1a1a1a;">Začíná na</div>
<svg style="left:1172px;top:90.0px" width="8" height="5" viewBox="0 0 8 5"><path d="M.5 .5L4.0 4L7.5 .5" fill="none" stroke="#555" stroke-width="1.1"/></svg>
<div style="left:967px;top:101px;width:221px;height:17px;background:#ffffb0;border-right:1px solid #949494;"></div>
<div style="left:1188px;top:66px;width:100px;height:17px;background:#f0f0f0;border-left:1px solid #fff;border-top:1px solid #fff;overflow:hidden;"></div>
<div class="b" style="left:1189.5px;top:67.5px;line-height:14px;height:14px;">Stav</div>
<div style="left:1188px;top:84px;width:100px;height:16px;background:#e1e1e1;overflow:hidden;"></div>
<div class="t" style="left:1192px;top:85px;line-height:14px;height:14px;color:#1a1a1a;">Vše</div>
<svg style="left:1274px;top:90.0px" width="8" height="5" viewBox="0 0 8 5"><path d="M.5 .5L4.0 4L7.5 .5" fill="none" stroke="#555" stroke-width="1.1"/></svg>
<div style="left:1188px;top:101px;width:102px;height:17px;background:#ffffb0;border-right:1px solid #949494;"></div>
<div style="left:1290px;top:66px;width:45px;height:17px;background:#f0f0f0;border-left:1px solid #fff;border-top:1px solid #fff;overflow:hidden;"></div>
<div class="b" style="left:1291.5px;top:67.5px;line-height:14px;height:14px;">Akce</div>
<div style="left:1290px;top:84px;width:45px;height:16px;background:#e1e1e1;overflow:hidden;"></div>
<div class="t" style="left:1294px;top:85px;line-height:14px;height:14px;color:#1a1a1a;">Ne...</div>
<svg style="left:1321px;top:90.0px" width="8" height="5" viewBox="0 0 8 5"><path d="M.5 .5L4.0 4L7.5 .5" fill="none" stroke="#555" stroke-width="1.1"/></svg>
<div style="left:1290px;top:101px;width:47px;height:17px;background:#ffffb0;border-right:1px solid #949494;"></div>
<div style="left:1337px;top:66px;width:157px;height:17px;background:#f0f0f0;border-left:1px solid #fff;border-top:1px solid #fff;overflow:hidden;"></div>
<div class="b" style="left:1338.5px;top:67.5px;line-height:14px;height:14px;">Obnos poplatku</div>
<div style="left:1337px;top:84px;width:157px;height:16px;background:#e1e1e1;overflow:hidden;"></div>
<div class="t" style="left:1341px;top:85px;line-height:14px;height:14px;color:#1a1a1a;">Stejné</div>
<svg style="left:1480px;top:90.0px" width="8" height="5" viewBox="0 0 8 5"><path d="M.5 .5L4.0 4L7.5 .5" fill="none" stroke="#555" stroke-width="1.1"/></svg>
<div style="left:1337px;top:101px;width:159px;height:17px;background:#ffffb0;border-right:1px solid #949494;"></div>
<div style="left:1496px;top:66px;width:100px;height:17px;background:#f0f0f0;border-left:1px solid #fff;border-top:1px solid #fff;overflow:hidden;"></div>
<div class="b" style="left:1497.5px;top:67.5px;line-height:14px;height:14px;">Vytištěno</div>
<div style="left:1496px;top:84px;width:100px;height:16px;background:#e1e1e1;overflow:hidden;"></div>
<div class="t" style="left:1500px;top:85px;line-height:14px;height:14px;color:#1a1a1a;">Bez výběru</div>
<svg style="left:1582px;top:90.0px" width="8" height="5" viewBox="0 0 8 5"><path d="M.5 .5L4.0 4L7.5 .5" fill="none" stroke="#555" stroke-width="1.1"/></svg>
<div style="left:1496px;top:101px;width:102px;height:17px;background:#ffffb0;border-right:1px solid #949494;"></div>
<div style="left:1598px;top:66px;width:86px;height:17px;background:#f0f0f0;border-left:1px solid #fff;border-top:1px solid #fff;overflow:hidden;"></div>
<div class="b" style="left:1599.5px;top:67.5px;line-height:14px;height:14px;">Storno</div>
<div style="left:1598px;top:84px;width:86px;height:16px;background:#e1e1e1;overflow:hidden;"></div>
<div class="t" style="left:1602px;top:85px;line-height:14px;height:14px;color:#1a1a1a;">Stejné</div>
<svg style="left:1670px;top:90.0px" width="8" height="5" viewBox="0 0 8 5"><path d="M.5 .5L4.0 4L7.5 .5" fill="none" stroke="#555" stroke-width="1.1"/></svg>
<div style="left:1598px;top:101px;width:88px;height:17px;background:#ffffb0;border-right:1px solid #949494;"></div>
<div style="left:1686px;top:66px;width:9px;height:54px;background:#f0f0f0;"></div>
<div style="left:1693px;top:66px;width:1px;height:53px;background:#b0b0b0;"></div>
<div style="left:1686px;top:118px;width:8px;height:1px;background:#a0a0a0;"></div>
<div class="t" style="left:418.5px;top:100.5px;line-height:16px;height:16px;font-size:16px;letter-spacing:0;color:#111;">×</div>
<div style="left:8px;top:120px;width:14px;height:13px;background:#f0f0f0;"></div>
<div style="left:10px;top:121px;width:11px;height:11px;background:linear-gradient(135deg,#dcdcdc,#fafafa);border:1px solid #999a9a;box-shadow:inset 0 0 0 1px #f4f4f4;"></div>
<div style="left:24px;top:120px;width:136px;height:13px;background:#0078d7;"></div>
<div class="t" style="left:26px;top:119.5px;line-height:14px;height:14px;color:#fff;">106</div>
<div style="left:161px;top:120px;width:136px;height:13px;background:#0078d7;"></div>
<div class="t" style="left:163px;top:119.5px;line-height:14px;height:14px;color:#fff;">07.04.2021</div>
<div style="left:298px;top:120px;width:128px;height:13px;background:#0078d7;"></div>
<div class="t" style="left:300px;top:119.5px;line-height:14px;height:14px;color:#fff;">Výdej</div>
<div style="left:427px;top:120px;width:127px;height:13px;background:#0078d7;"></div>
<div class="t" style="left:429px;top:119.5px;line-height:14px;height:14px;color:#fff;">42</div>
<div style="left:555px;top:120px;width:137px;height:13px;background:#0078d7;"></div>
<div class="t" style="left:557px;top:119.5px;line-height:14px;height:14px;color:#fff;">2142001141</div>
<div style="left:693px;top:120px;width:201px;height:13px;background:#0078d7;"></div>
<div class="t" style="left:693px;top:119.5px;line-height:14px;height:14px;width:198px;text-align:right;color:#fff;">2 448,00</div>
<div style="left:895px;top:120px;width:71px;height:13px;background:#0078d7;"></div>
<div class="t" style="left:897px;top:119.5px;line-height:14px;height:14px;color:#fff;"><span style="font-size:10.3px;letter-spacing:-0.88px">CZK</span></div>
<div style="left:967px;top:120px;width:220px;height:13px;background:#0078d7;"></div>
<div class="t" style="left:969px;top:119.5px;line-height:14px;height:14px;color:#fff;">11 - Kostolányiová Jana</div>
<div style="left:1188px;top:120px;width:101px;height:13px;background:#0078d7;"></div>
<div class="t" style="left:1190px;top:119.5px;line-height:14px;height:14px;color:#fff;">Připraveno</div>
<div style="left:1290px;top:120px;width:46px;height:13px;background:#0078d7;"></div>
<div style="left:1337px;top:120px;width:158px;height:13px;background:#0078d7;"></div>
<div class="t" style="left:1337px;top:119.5px;line-height:14px;height:14px;width:155px;text-align:right;color:#fff;">0,00</div>
<div style="left:1496px;top:120px;width:101px;height:13px;background:#0078d7;"></div>
<div style="left:1598px;top:120px;width:87px;height:13px;background:#0078d7;"></div>
<div style="left:1293px;top:121px;width:3px;height:11px;background:linear-gradient(#fff 0,#fff 55%,#f08a24 55%);border-left:1px solid #888;"></div>
<div style="left:1296px;top:121px;width:3px;height:11px;background:linear-gradient(#fff 0,#fff 55%,#3a8ee0 55%);border-left:1px solid #888;"></div>
<div style="left:1299px;top:121px;width:3px;height:11px;background:linear-gradient(#fff 0,#fff 55%,#1b3f8a 55%);border-left:1px solid #888;"></div>
<div style="left:1302px;top:121px;width:3px;height:11px;background:linear-gradient(#fff 0,#fff 55%,#2f9a44 55%);border-left:1px solid #888;"></div>
<div style="left:1501px;top:122px;width:10px;height:10px;background:linear-gradient(135deg,#dcdcdc,#fafafa);border:1px solid #999a9a;box-shadow:inset 0 0 0 1px #f4f4f4;"></div>
<div style="left:8px;top:134px;width:14px;height:14px;background:#f0f0f0;"></div>
<div style="left:10px;top:135px;width:11px;height:11px;background:linear-gradient(135deg,#dcdcdc,#fafafa);border:1px solid #999a9a;box-shadow:inset 0 0 0 1px #f4f4f4;"></div>
<div style="left:24px;top:134px;width:136px;height:14px;background:#e1f3fd;"></div>
<div class="t" style="left:26px;top:134px;line-height:14px;height:14px;color:#f0141e;">106</div>
<div style="left:161px;top:134px;width:136px;height:14px;background:#e1f3fd;"></div>
<div class="t" style="left:163px;top:134px;line-height:14px;height:14px;color:#f0141e;">07.04.2021</div>
<div style="left:298px;top:134px;width:128px;height:14px;background:#e1f3fd;"></div>
<div class="t" style="left:300px;top:134px;line-height:14px;height:14px;color:#f0141e;">Výdej</div>
<div style="left:427px;top:134px;width:127px;height:14px;background:#e1f3fd;"></div>
<div class="t" style="left:429px;top:134px;line-height:14px;height:14px;color:#f0141e;">42</div>
<div style="left:555px;top:134px;width:137px;height:14px;background:#e1f3fd;"></div>
<div class="t" style="left:557px;top:134px;line-height:14px;height:14px;color:#f0141e;">2142001142</div>
<div style="left:693px;top:134px;width:201px;height:14px;background:#e1f3fd;"></div>
<div class="t" style="left:693px;top:134px;line-height:14px;height:14px;width:198px;text-align:right;color:#f0141e;">200,00</div>
<div style="left:895px;top:134px;width:71px;height:14px;background:#e1f3fd;"></div>
<div class="t" style="left:897px;top:134px;line-height:14px;height:14px;color:#f0141e;"><span style="font-size:10.3px;letter-spacing:-0.88px">CZK</span></div>
<div style="left:967px;top:134px;width:220px;height:14px;background:#e1f3fd;"></div>
<div class="t" style="left:969px;top:134px;line-height:14px;height:14px;color:#f0141e;">19 - Hradecká Kateřina</div>
<div style="left:1188px;top:134px;width:101px;height:14px;background:#e1f3fd;"></div>
<div class="t" style="left:1190px;top:134px;line-height:14px;height:14px;color:#f0141e;">Připraveno</div>
<div style="left:1290px;top:134px;width:46px;height:14px;background:#e1f3fd;"></div>
<div style="left:1337px;top:134px;width:158px;height:14px;background:#e1f3fd;"></div>
<div class="t" style="left:1337px;top:134px;line-height:14px;height:14px;width:155px;text-align:right;color:#f0141e;">0,00</div>
<div style="left:1496px;top:134px;width:101px;height:14px;background:#e1f3fd;"></div>
<div style="left:1598px;top:134px;width:87px;height:14px;background:#e1f3fd;"></div>
<div style="left:1293px;top:135px;width:3px;height:11px;background:linear-gradient(#fff 0,#fff 55%,#f08a24 55%);border-left:1px solid #888;"></div>
<div style="left:1296px;top:135px;width:3px;height:11px;background:linear-gradient(#fff 0,#fff 55%,#3a8ee0 55%);border-left:1px solid #888;"></div>
<div style="left:1299px;top:135px;width:3px;height:11px;background:linear-gradient(#fff 0,#fff 55%,#1b3f8a 55%);border-left:1px solid #888;"></div>
<div style="left:1302px;top:135px;width:3px;height:11px;background:linear-gradient(#fff 0,#fff 55%,#2f9a44 55%);border-left:1px solid #888;"></div>
<div style="left:1501px;top:136px;width:10px;height:10px;background:linear-gradient(135deg,#dcdcdc,#fafafa);border:1px solid #999a9a;box-shadow:inset 0 0 0 1px #f4f4f4;"></div>
<div style="left:8px;top:149px;width:14px;height:13px;background:#f0f0f0;"></div>
<div style="left:10px;top:150px;width:11px;height:11px;background:linear-gradient(135deg,#dcdcdc,#fafafa);border:1px solid #999a9a;box-shadow:inset 0 0 0 1px #f4f4f4;"></div>
<div style="left:24px;top:149px;width:136px;height:13px;background:#fff;"></div>
<div class="t" style="left:26px;top:148.5px;line-height:14px;height:14px;color:#f0141e;">106</div>
<div style="left:161px;top:149px;width:136px;height:13px;background:#fff;"></div>
<div class="t" style="left:163px;top:148.5px;line-height:14px;height:14px;color:#f0141e;">07.04.2021</div>
<div style="left:298px;top:149px;width:128px;height:13px;background:#fff;"></div>
<div class="t" style="left:300px;top:148.5px;line-height:14px;height:14px;color:#f0141e;">Výdej</div>
<div style="left:427px;top:149px;width:127px;height:13px;background:#fff;"></div>
<div class="t" style="left:429px;top:148.5px;line-height:14px;height:14px;color:#f0141e;">42</div>
<div style="left:555px;top:149px;width:137px;height:13px;background:#fff;"></div>
<div class="t" style="left:557px;top:148.5px;line-height:14px;height:14px;color:#f0141e;">2142001143</div>
<div style="left:693px;top:149px;width:201px;height:13px;background:#fff;"></div>
<div class="t" style="left:693px;top:148.5px;line-height:14px;height:14px;width:198px;text-align:right;color:#f0141e;">251,00</div>
<div style="left:895px;top:149px;width:71px;height:13px;background:#fff;"></div>
<div class="t" style="left:897px;top:148.5px;line-height:14px;height:14px;color:#f0141e;"><span style="font-size:10.3px;letter-spacing:-0.88px">CZK</span></div>
<div style="left:967px;top:149px;width:220px;height:13px;background:#fff;"></div>
<div class="t" style="left:969px;top:148.5px;line-height:14px;height:14px;color:#f0141e;">01 - Braunšveig Martin</div>
<div style="left:1188px;top:149px;width:101px;height:13px;background:#fff;"></div>
<div class="t" style="left:1190px;top:148.5px;line-height:14px;height:14px;color:#f0141e;">Připraveno</div>
<div style="left:1290px;top:149px;width:46px;height:13px;background:#fff;"></div>
<div style="left:1337px;top:149px;width:158px;height:13px;background:#fff;"></div>
<div class="t" style="left:1337px;top:148.5px;line-height:14px;height:14px;width:155px;text-align:right;color:#f0141e;">0,00</div>
<div style="left:1496px;top:149px;width:101px;height:13px;background:#fff;"></div>
<div style="left:1598px;top:149px;width:87px;height:13px;background:#fff;"></div>
<div style="left:1293px;top:150px;width:3px;height:11px;background:linear-gradient(#fff 0,#fff 55%,#f08a24 55%);border-left:1px solid #888;"></div>
<div style="left:1296px;top:150px;width:3px;height:11px;background:linear-gradient(#fff 0,#fff 55%,#3a8ee0 55%);border-left:1px solid #888;"></div>
<div style="left:1299px;top:150px;width:3px;height:11px;background:linear-gradient(#fff 0,#fff 55%,#1b3f8a 55%);border-left:1px solid #888;"></div>
<div style="left:1302px;top:150px;width:3px;height:11px;background:linear-gradient(#fff 0,#fff 55%,#2f9a44 55%);border-left:1px solid #888;"></div>
<div style="left:1501px;top:151px;width:10px;height:10px;background:linear-gradient(135deg,#dcdcdc,#fafafa);border:1px solid #999a9a;box-shadow:inset 0 0 0 1px #f4f4f4;"></div>
<div style="left:8px;top:163px;width:14px;height:13px;background:#f0f0f0;"></div>
<div style="left:10px;top:164px;width:11px;height:11px;background:linear-gradient(135deg,#dcdcdc,#fafafa);border:1px solid #999a9a;box-shadow:inset 0 0 0 1px #f4f4f4;"></div>
<div style="left:24px;top:163px;width:136px;height:13px;background:#e1f3fd;"></div>
<div class="t" style="left:26px;top:162.5px;line-height:14px;height:14px;color:#f0141e;">106</div>
<div style="left:161px;top:163px;width:136px;height:13px;background:#e1f3fd;"></div>
<div class="t" style="left:163px;top:162.5px;line-height:14px;height:14px;color:#f0141e;">08.04.2021</div>
<div style="left:298px;top:163px;width:128px;height:13px;background:#e1f3fd;"></div>
<div class="t" style="left:300px;top:162.5px;line-height:14px;height:14px;color:#f0141e;">Výdej</div>
<div style="left:427px;top:163px;width:127px;height:13px;background:#e1f3fd;"></div>
<div class="t" style="left:429px;top:162.5px;line-height:14px;height:14px;color:#f0141e;">42</div>
<div style="left:555px;top:163px;width:137px;height:13px;background:#e1f3fd;"></div>
<div class="t" style="left:557px;top:162.5px;line-height:14px;height:14px;color:#f0141e;">2142001144</div>
<div style="left:693px;top:163px;width:201px;height:13px;background:#e1f3fd;"></div>
<div class="t" style="left:693px;top:162.5px;line-height:14px;height:14px;width:198px;text-align:right;color:#f0141e;">396,00</div>
<div style="left:895px;top:163px;width:71px;height:13px;background:#e1f3fd;"></div>
<div class="t" style="left:897px;top:162.5px;line-height:14px;height:14px;color:#f0141e;"><span style="font-size:10.3px;letter-spacing:-0.88px">CZK</span></div>
<div style="left:967px;top:163px;width:220px;height:13px;background:#e1f3fd;"></div>
<div class="t" style="left:969px;top:162.5px;line-height:14px;height:14px;color:#f0141e;">11 - Kostolányiová Jana</div>
<div style="left:1188px;top:163px;width:101px;height:13px;background:#e1f3fd;"></div>
<div class="t" style="left:1190px;top:162.5px;line-height:14px;height:14px;color:#f0141e;">Připraveno</div>
<div style="left:1290px;top:163px;width:46px;height:13px;background:#e1f3fd;"></div>
<div style="left:1337px;top:163px;width:158px;height:13px;background:#e1f3fd;"></div>
<div class="t" style="left:1337px;top:162.5px;line-height:14px;height:14px;width:155px;text-align:right;color:#f0141e;">0,00</div>
<div style="left:1496px;top:163px;width:101px;height:13px;background:#e1f3fd;"></div>
<div style="left:1598px;top:163px;width:87px;height:13px;background:#e1f3fd;"></div>
<div style="left:1293px;top:164px;width:3px;height:11px;background:linear-gradient(#fff 0,#fff 55%,#f08a24 55%);border-left:1px solid #888;"></div>
<div style="left:1296px;top:164px;width:3px;height:11px;background:linear-gradient(#fff 0,#fff 55%,#3a8ee0 55%);border-left:1px solid #888;"></div>
<div style="left:1299px;top:164px;width:3px;height:11px;background:linear-gradient(#fff 0,#fff 55%,#1b3f8a 55%);border-left:1px solid #888;"></div>
<div style="left:1302px;top:164px;width:3px;height:11px;background:linear-gradient(#fff 0,#fff 55%,#2f9a44 55%);border-left:1px solid #888;"></div>
<div style="left:1501px;top:165px;width:10px;height:10px;background:linear-gradient(135deg,#dcdcdc,#fafafa);border:1px solid #999a9a;box-shadow:inset 0 0 0 1px #f4f4f4;"></div>
<div style="left:7px;top:177px;width:1706px;height:8px;background:#f0f0f0;"></div>
<div style="left:1695px;top:66px;width:17px;height:119px;background:#f0f0f0;"></div>
<svg style="left:1699px;top:73px" width="9" height="6" viewBox="0 0 9 6"><path d="M.5 5L4.5 .5L8.5 5" fill="none" stroke="#444" stroke-width="1.4"/></svg>
<svg style="left:1699px;top:176px" width="9" height="6" viewBox="0 0 9 6"><path d="M.5 .5L4.5 5L8.5 .5" fill="none" stroke="#444" stroke-width="1.4"/></svg>
<div style="left:1696px;top:161px;width:16px;height:8px;background:#c9c9c9;"></div>
<div style="left:6px;top:185px;width:1706px;height:1px;background:#9c9c9c;"></div>
<div style="left:6px;top:186px;width:1706px;height:4px;background:#f7f7f7;"></div>
<div style="left:6px;top:189px;width:1706px;height:2px;background:linear-gradient(#b0b0b0,#7c7c7c);"></div>
<div style="left:6px;top:65px;width:1px;height:121px;background:#8c8c8c;"></div>
<div style="left:6px;top:190px;width:1px;height:510px;background:#8c8c8c;"></div>
<div style="left:9px;top:197px;width:403px;height:510px;border:1px solid #c2d2e4;border-radius:5px;box-shadow:inset 1px 1px 0 #fbfcfe;"></div>
<div style="left:19px;top:207px;width:387px;height:41px;border:1px solid #c2d2e4;border-radius:4px;box-shadow:inset 1px 1px 0 #fbfcfe, 1px 1px 0 #fbfcfe;"></div>
<div class="b" style="left:24px;top:202px;height:14px;line-height:14px;padding:0 3px 0 2px;background:#f0f0f0;letter-spacing:0.15px;">Pokladna</div>
<div style="left:28px;top:221px;width:100px;height:20px;background:#e7e7e7;border:1px solid #b2b2b2;"></div>
<div style="left:116px;top:221px;width:12px;height:20px;background:#9c9c9c;border:1px solid #8a8a8a;"></div>
<svg style="left:119px;top:227.0px" width="7" height="9" viewBox="0 0 7 9"><path d="M3.500 0v5M1 3.500l2.500 2.500 2.500-2.500M.5 8h6" fill="none" stroke="#b6b6b6" stroke-width="1.3"/></svg>
<div class="t" style="left:31px;top:224.5px;line-height:14px;height:14px;">106</div>
<div class="t" style="left:137px;top:223px;line-height:14px;height:14px;color:#960096;">Pokladna VÚ Effenbergerová</div>
<div style="left:318px;top:222px;width:70px;height:19px;background:#e1e1e1;border:1px solid #adadad;"></div>
<svg style="left:334.5px;top:223.5px" width="14" height="14" viewBox="0 0 16 16"><path d="M4 1.500h8v5h-8z" fill="#fff" stroke="#2a6fc0" stroke-width="1"/><path d="M1 6.500h14v6.500h-14z" fill="#2f7fd8"/><path d="M1 6.500h14v2.200h-14z" fill="#6ab0f0"/><path d="M3.500 10.500h9v4h-9z" fill="#e8f2fc" stroke="#2a6fc0" stroke-width=".8"/><path d="M1 13h14" stroke="#1b4f9a" stroke-width="1"/></svg>
<div class="t" style="left:352px;top:224.5px;line-height:14px;height:14px;">Stav</div>
<div style="left:19px;top:257px;width:387px;height:141px;border:1px solid #c2d2e4;border-radius:4px;box-shadow:inset 1px 1px 0 #fbfcfe, 1px 1px 0 #fbfcfe;"></div>
<div class="b" style="left:24px;top:252px;height:14px;line-height:14px;padding:0 3px 0 2px;background:#f0f0f0;letter-spacing:0.15px;">Hlavička dokladu</div>
<div class="t" style="left:28px;top:274px;line-height:14px;height:14px;">Datum vystavení</div>
<div style="left:117px;top:271px;width:101px;height:19px;background:#e7e7e7;border:1px solid #b2b2b2;"></div>
<div style="left:206px;top:271px;width:12px;height:19px;background:#9c9c9c;border:1px solid #8a8a8a;"></div>
<svg style="left:208px;top:274.5px" width="9" height="12" viewBox="0 0 9 12"><path d="M.5 .5h8v11h-8zM.5 3h8M.5 5.500h8M.5 8h8M3 3v8.500M6 3v8.500" fill="none" stroke="#bdbdbd" stroke-width=".9"/></svg>
<div class="t" style="left:120px;top:274px;line-height:14px;height:14px;">07.04.2021</div>
<div class="t" style="left:28px;top:294px;line-height:14px;height:14px;">Typ dokladu</div>
<div style="left:117px;top:291px;width:101px;height:19px;background:#cccccc;border:1px solid #bcbcbc;"></div>
<div class="t" style="left:120px;top:293.5px;line-height:14px;height:14px;color:#5f5f5f;">Výdej</div>
<svg style="left:204px;top:298.5px" width="9" height="5.5" viewBox="0 0 9 5.5"><path d="M.5 .5L4.5 4.5L8.5 .5" fill="none" stroke="#a6a6a6" stroke-width="1.1"/></svg>
<div class="t" style="left:28px;top:314px;line-height:14px;height:14px;">Dokladová řada</div>
<div style="left:117px;top:311px;width:101px;height:19px;background:#e7e7e7;border:1px solid #b2b2b2;"></div>
<div style="left:206px;top:311px;width:12px;height:19px;background:#9c9c9c;border:1px solid #8a8a8a;"></div>
<svg style="left:209px;top:316.5px" width="7" height="9" viewBox="0 0 7 9"><path d="M3.500 0v5M1 3.500l2.500 2.500 2.500-2.500M.5 8h6" fill="none" stroke="#b6b6b6" stroke-width="1.3"/></svg>
<div class="t" style="left:120px;top:314px;line-height:14px;height:14px;">42</div>
<div class="t" style="left:228px;top:313px;line-height:14px;height:14px;color:#960096;"><span style="font-size:10.3px;letter-spacing:-0.88px">POKLADNA EFFENBERGEROVÁ</span></div>
<div class="b" style="left:28px;top:333px;line-height:16px;height:16px;font-size:13px;letter-spacing:-0.2px;">Doklad</div>
<div class="b" style="left:118px;top:332px;line-height:16px;height:16px;font-size:13px;letter-spacing:0.75px;color:#960096;">2142001141</div>
<div class="t" style="left:28px;top:354px;line-height:14px;height:14px;">Evid. č. dokladu</div>
<div style="left:117px;top:351px;width:272px;height:20px;background:#e7e7e7;border:1px solid #b2b2b2;"></div>
<div class="t" style="left:28px;top:374px;line-height:14px;height:14px;">Kód režimu plnění</div>
<div style="left:117px;top:372px;width:269px;height:18px;background:#cccccc;border:1px solid #bcbcbc;"></div>
<div class="t" style="left:120px;top:374px;line-height:14px;height:14px;color:#5f5f5f;">Běžné plnění</div>
<svg style="left:372px;top:379.0px" width="9" height="5.5" viewBox="0 0 9 5.5"><path d="M.5 .5L4.5 4.5L8.5 .5" fill="none" stroke="#a6a6a6" stroke-width="1.1"/></svg>
<div style="left:19px;top:407px;width:387px;height:182px;border:1px solid #c2d2e4;border-radius:4px;box-shadow:inset 1px 1px 0 #fbfcfe, 1px 1px 0 #fbfcfe;"></div>
<div class="b" style="left:24px;top:402px;height:14px;line-height:14px;padding:0 3px 0 2px;background:#f0f0f0;letter-spacing:0.15px;">Plátce/příjemce</div>
<div class="t" style="left:28px;top:424.5px;line-height:14px;height:14px;">Registr</div>
<div style="left:88px;top:422px;width:84px;height:19px;background:#cccccc;border:1px solid #bcbcbc;"></div>
<div class="t" style="left:91px;top:424.5px;line-height:14px;height:14px;color:#5f5f5f;">Adresář</div>
<svg style="left:158px;top:429.5px" width="9" height="5.5" viewBox="0 0 9 5.5"><path d="M.5 .5L4.5 4.5L8.5 .5" fill="none" stroke="#a6a6a6" stroke-width="1.1"/></svg>
<div class="t" style="left:28px;top:444.5px;line-height:14px;height:14px;">Jméno</div>
<div style="left:88px;top:442px;width:311px;height:19px;background:#e7e7e7;border:1px solid #b2b2b2;"></div>
<div style="left:387px;top:442px;width:12px;height:19px;background:#9c9c9c;border:1px solid #8a8a8a;"></div>
<svg style="left:390px;top:447.5px" width="7" height="9" viewBox="0 0 7 9"><path d="M3.500 0v5M1 3.500l2.500 2.500 2.500-2.500M.5 8h6" fill="none" stroke="#b6b6b6" stroke-width="1.3"/></svg>
<div class="t" style="left:91px;top:445px;line-height:14px;height:14px;">11 - Kostolányiová Jana</div>
<div class="t" style="left:28px;top:464.5px;line-height:14px;height:14px;">Ulice</div>
<div style="left:88px;top:462px;width:311px;height:19px;background:#e7e7e7;border:1px solid #b2b2b2;"></div>
<div class="t" style="left:28px;top:484.5px;line-height:14px;height:14px;">Č. popisné</div>
<div style="left:88px;top:482px;width:141px;height:19px;background:#e7e7e7;border:1px solid #b2b2b2;"></div>
<div style="left:229px;top:482px;width:60px;height:19px;background:#f0f0f0;"></div>
<div class="t" style="left:229px;top:484.5px;line-height:14px;height:14px;width:60px;text-align:center;"><span style="font-size:10.3px;letter-spacing:-0.88px">PSČ</span></div>
<div style="left:289px;top:482px;width:110px;height:19px;background:#e7e7e7;border:1px solid #b2b2b2;"></div>
<div style="left:387px;top:482px;width:12px;height:19px;background:#9c9c9c;border:1px solid #8a8a8a;"></div>
<svg style="left:390px;top:487.5px" width="7" height="9" viewBox="0 0 7 9"><path d="M3.500 0v5M1 3.500l2.500 2.500 2.500-2.500M.5 8h6" fill="none" stroke="#b6b6b6" stroke-width="1.3"/></svg>
<div class="t" style="left:28px;top:504.5px;line-height:14px;height:14px;">Obec</div>
<div style="left:88px;top:502px;width:311px;height:19px;background:#e7e7e7;border:1px solid #b2b2b2;"></div>
<div class="t" style="left:28px;top:524.5px;line-height:14px;height:14px;">Číslo firmy</div>
<div style="left:88px;top:522px;width:121px;height:19px;background:#e7e7e7;border:1px solid #b2b2b2;"></div>
<div style="left:197px;top:522px;width:12px;height:19px;background:#9c9c9c;border:1px solid #8a8a8a;"></div>
<svg style="left:200px;top:527.5px" width="7" height="9" viewBox="0 0 7 9"><path d="M3.500 0v5M1 3.500l2.500 2.500 2.500-2.500M.5 8h6" fill="none" stroke="#b6b6b6" stroke-width="1.3"/></svg>
<div style="left:209px;top:522px;width:69px;height:19px;background:#f0f0f0;"></div>
<div class="t" style="left:217px;top:524.5px;line-height:14px;height:14px;">Osobní číslo</div>
<div style="left:278px;top:522px;width:121px;height:19px;background:#e7e7e7;border:1px solid #b2b2b2;"></div>
<div style="left:387px;top:522px;width:12px;height:19px;background:#9c9c9c;border:1px solid #8a8a8a;"></div>
<svg style="left:390px;top:527.5px" width="7" height="9" viewBox="0 0 7 9"><path d="M3.500 0v5M1 3.500l2.500 2.500 2.500-2.500M.5 8h6" fill="none" stroke="#b6b6b6" stroke-width="1.3"/></svg>
<div class="t" style="left:28px;top:544.5px;line-height:14px;height:14px;">IČ</div>
<div style="left:88px;top:542px;width:121px;height:19px;background:#e7e7e7;border:1px solid #b2b2b2;"></div>
<div style="left:197px;top:542px;width:12px;height:19px;background:#9c9c9c;border:1px solid #8a8a8a;"></div>
<svg style="left:200px;top:547.5px" width="7" height="9" viewBox="0 0 7 9"><path d="M3.500 0v5M1 3.500l2.500 2.500 2.500-2.500M.5 8h6" fill="none" stroke="#b6b6b6" stroke-width="1.3"/></svg>
<div class="t" style="left:28px;top:564.5px;line-height:14px;height:14px;"><span style="font-size:10.3px;letter-spacing:-0.88px">DIČ</span></div>
<div style="left:88px;top:562px;width:121px;height:19px;background:#e7e7e7;border:1px solid #b2b2b2;"></div>
<div style="left:19px;top:597px;width:387px;height:113px;border:1px solid #c2d2e4;border-radius:4px;box-shadow:inset 1px 1px 0 #fbfcfe, 1px 1px 0 #fbfcfe;"></div>
<div class="b" style="left:24px;top:592px;height:14px;line-height:14px;padding:0 3px 0 2px;background:#f0f0f0;letter-spacing:0.15px;">Doklad</div>
<div class="t" style="left:28px;top:614px;line-height:14px;height:14px;">Obnos celkem</div>
<div style="left:108px;top:611px;width:141px;height:19px;background:#e7e7e7;border:1px solid #b2b2b2;"></div>
<div class="t" style="left:108px;top:614px;line-height:14px;height:14px;width:137px;text-align:right;">2 448,00</div>
<div class="t" style="left:258px;top:612.5px;line-height:14px;height:14px;color:#960096;"><span style="font-size:10.3px;letter-spacing:-0.88px">CZK</span></div>
<div class="t" style="left:308px;top:614px;line-height:14px;height:14px;">Kurz</div>
<div style="left:337px;top:611px;width:61px;height:19px;background:#e7e7e7;border:1px solid #b2b2b2;"></div>
<div class="t" style="left:337px;top:614px;line-height:14px;height:14px;width:57px;text-align:right;">1,0000</div>
<div class="t" style="left:28px;top:634px;line-height:14px;height:14px;">Z toho poplatek</div>
<div style="left:108px;top:631px;width:141px;height:19px;background:#e7e7e7;border:1px solid #b2b2b2;"></div>
<div class="t" style="left:108px;top:634px;line-height:14px;height:14px;width:137px;text-align:right;">0,00</div>
<div class="t" style="left:258px;top:632.5px;line-height:14px;height:14px;color:#960096;"><span style="font-size:10.3px;letter-spacing:-0.88px">CZK</span></div>
<div class="t" style="left:28px;top:654px;line-height:14px;height:14px;">Placeno kartou</div>
<div style="left:108px;top:651px;width:141px;height:19px;background:#e7e7e7;border:1px solid #b2b2b2;"></div>
<div style="left:31px;top:684px;width:11px;height:11px;background:#f6f6f6;border:1px solid #bdbdbd;"></div>
<div class="t" style="left:45px;top:682px;line-height:14px;height:14px;color:#3c3c3c;">Vytištěno</div>
<div style="left:111px;top:684px;width:11px;height:11px;background:#f6f6f6;border:1px solid #bdbdbd;"></div>
<div class="t" style="left:125px;top:682px;line-height:14px;height:14px;color:#3c3c3c;">Storno</div>
<div style="left:258px;top:681px;width:115px;height:20px;background:#cccccc;border:1px solid #bcbcbc;"></div>
<div class="t" style="left:261px;top:684px;line-height:14px;height:14px;color:#5f5f5f;">Připraveno</div>
<svg style="left:359px;top:689.0px" width="9" height="5.5" viewBox="0 0 9 5.5"><path d="M.5 .5L4.5 4.5L8.5 .5" fill="none" stroke="#a6a6a6" stroke-width="1.1"/></svg>
<div style="left:1711px;top:190px;width:1px;height:510px;background:#8c8c8c;"></div>
<div style="left:416px;top:196px;width:1293px;height:520px;border:1px solid #c2d2e4;border-radius:5px;box-shadow:inset 1px 1px 0 #fbfcfe;"></div>
<div class="b" style="left:421px;top:191px;height:11px;line-height:11px;padding:0 3px 0 3px;background:#f0f0f0;font-size:9.3px;letter-spacing:0px;">Položky dokladu</div>
<div style="left:422px;top:204px;width:1283px;height:127px;border:2px solid #bccbdd;"></div>
<div style="left:424px;top:206px;width:1278px;height:123px;border:1px solid #8c8c8c;"></div>
<div style="left:425px;top:207px;width:1276px;height:1px;background:#fbfbfb;"></div>
<div style="left:422px;top:330px;width:1283px;height:400px;border:2px solid #bccbdd;"></div>
<div style="left:424px;top:332px;width:1278px;height:400px;border:1px solid #8c8c8c;"></div>
<div style="left:425px;top:333px;width:1276px;height:1px;background:#fbfbfb;"></div>
<div style="left:424px;top:329px;width:1279px;height:3px;background:#f6f6f6;"></div>
<div style="left:426px;top:208.6px;width:1px;height:33px;background:#a5a5a5;"></div>
<div style="left:427px;top:208.6px;width:1px;height:33px;background:#fafafa;"></div>
<svg style="left:441px;top:210.6px" width="14" height="14" viewBox="0 0 16 16"><path d="M2 1.5h11M2 3.8h11" stroke="#222" stroke-width="1.3"/><path d="M3 6h9" stroke="#555" stroke-width="1"/><ellipse cx="7.5" cy="10.5" rx="6" ry="3.6" fill="#e9d36a" stroke="#9a7d1c" stroke-width="1"/><circle cx="7.5" cy="10.6" r="2.6" fill="#1d4f7a"/><circle cx="7.5" cy="10.6" r="1.1" fill="#0a1a28"/><path d="M11.5 7.5l2-1" stroke="#b33" stroke-width="1.2"/></svg>
<svg style="left:457px;top:216.6px" width="7" height="4" viewBox="0 0 7 4"><path d="M0 0h7L3.5 4z" fill="#555"/></svg>
<div class="t" style="left:402.5px;top:227.6px;line-height:14px;height:14px;width:100px;text-align:center;color:#1c1c1c;">Zobrazení</div>
<div style="left:478px;top:208.6px;width:1px;height:33px;background:#a5a5a5;"></div>
<div style="left:479px;top:208.6px;width:1px;height:33px;background:#fafafa;"></div>
<svg style="left:485px;top:210.6px" width="14" height="14" viewBox="0 0 16 16"><path d="M2.5 1.5h8.5v12h-8.5z" fill="#fff" stroke="#3b8fd6" stroke-width="1.4"/><path d="M7 8l4.5 4.8" stroke="#e8742a" stroke-width="2"/><path d="M10.8 12l1.4 1.6" stroke="#8a3a10" stroke-width="1.6"/></svg>
<svg style="left:505.5px;top:210.6px" width="14" height="14" viewBox="0 0 16 16"><path d="M2.5 1.5h9v12h-9z" fill="#fff" stroke="#3b8fd6" stroke-width="1.4"/><path d="M4 3h6.5v6h-6.5z" fill="#f6c433"/><path d="M7.5 8l4 4.5" stroke="#e8742a" stroke-width="2.2"/></svg>
<svg style="left:528px;top:210.6px" width="14" height="14" viewBox="0 0 16 16"><path d="M3.5 5h8l-.6 9.5h-6.8z" fill="#e3ae2d" stroke="#b58417" stroke-width="1"/><path d="M2.8 4h9.4" stroke="#b58417" stroke-width="1.6"/><path d="M6 2.5h3" stroke="#b58417" stroke-width="1.4"/><path d="M6 7v6M9 7v6" stroke="#c6931f" stroke-width="1"/></svg>
<svg style="left:550px;top:210.6px" width="14" height="14" viewBox="0 0 16 16"><path d="M1.5 1.5h7v11h-7z" fill="#fff" stroke="#3b8fd6" stroke-width="1.3"/><path d="M4.5 3h8v11h-8z" fill="#fff" stroke="#3b8fd6" stroke-width="1.3"/><path d="M8.5 9l4 4.6" stroke="#e8742a" stroke-width="2"/></svg>
<div class="t" style="left:474.5px;top:227.6px;line-height:14px;height:14px;width:100px;text-align:center;color:#1c1c1c;">Úpravy</div>
<div style="left:570px;top:208.6px;width:1px;height:33px;background:#a5a5a5;"></div>
<div style="left:571px;top:208.6px;width:1px;height:33px;background:#fafafa;"></div>
<svg style="left:578px;top:210.6px" width="14" height="14" viewBox="0 0 16 16"><path d="M0 2h13M0 4.5h13M0 7h13M0 9.5h13M0 12h13M0 14.5h13" stroke="#222" stroke-width="1.1"/><circle cx="5" cy="6.5" r="2" fill="#f28c28"/><path d="M1.5 14c0-4 1.5-5.5 3.5-5.5s3.5 1.5 3.5 5.5z" fill="#f28c28"/><circle cx="10" cy="3.2" r="1.9" fill="#3aa0e0"/><path d="M7.2 11c0-4 1.2-5.6 2.8-5.6s2.8 1.6 2.8 5.600z" fill="#3aa0e0"/></svg>
<svg style="left:593px;top:216.6px" width="7" height="4" viewBox="0 0 7 4"><path d="M0 0h7L3.5 4z" fill="#555"/></svg>
<svg style="left:608px;top:210.6px" width="14" height="14" viewBox="0 0 16 16"><path d="M1.500 3h12l-4.500 5.500v5.500l-3-1.200v-4.300z" fill="#2f8ad1"/><ellipse cx="7.500" cy="3" rx="6" ry="1.800" fill="#6db8ea" stroke="#2a78b8" stroke-width=".8"/><path d="M3 3.800c3 1 6 1 9 0" stroke="#e8c040" stroke-width=".8" fill="none"/></svg>
<svg style="left:622px;top:216.6px" width="7" height="4" viewBox="0 0 7 4"><path d="M0 0h7L3.5 4z" fill="#555"/></svg>
<svg style="left:636px;top:210.6px" width="14" height="14" viewBox="0 0 16 16"><path d="M3 1.500h6v6h-6z" fill="none" stroke="#5b8fd0" stroke-width="1.5"/><path d="M1 8h9v4.500h-9z" fill="#7fa6dc" stroke="#4a78ba" stroke-width="1"/><path d="M6 6.500h7.500v7h-7.500z" fill="none" stroke="#f0a060" stroke-width="1.500"/></svg>
<svg style="left:658px;top:210.6px" width="14" height="14" viewBox="0 0 16 16"><path d="M1 4h12v10.500h-12z" fill="#1f7fd0"/><circle cx="7" cy="9.500" r="3.600" fill="#fff"/><path d="M7 7.500v2.200l1.600 1" stroke="#333" stroke-width="1" fill="none"/><path d="M5 4.500c1-3 5-4 7-1.500l1.500-1v4.500h-4.500l1.500-1.500c-1.500-1.500-3.500-1-4 1z" fill="#f5b921" stroke="#c98a10" stroke-width=".5"/></svg>
<svg style="left:673px;top:216.6px" width="7" height="4" viewBox="0 0 7 4"><path d="M0 0h7L3.5 4z" fill="#555"/></svg>
<svg style="left:687px;top:210.6px" width="14" height="14" viewBox="0 0 16 16"><rect x="1" y="1" width="13" height="13.500" rx="1.500" fill="#fdf3dc" stroke="#e0a030" stroke-width="1.500"/><path d="M5 3.500v9M10 3.500v9" stroke="#d8952a" stroke-width="1.200"/><circle cx="5" cy="9" r="1.700" fill="#fdf3dc" stroke="#d8952a" stroke-width="1.200"/><circle cx="10" cy="5.500" r="1.700" fill="#fdf3dc" stroke="#d8952a" stroke-width="1.200"/></svg>
<svg style="left:710px;top:210.6px" width="14" height="14" viewBox="0 0 16 16"><circle cx="7.500" cy="7.800" r="6.500" fill="#1e9be0"/><text x="7.500" y="11.600" font-size="11" font-weight="bold" text-anchor="middle" fill="#fff" font-family="Liberation Sans,sans-serif">?</text></svg>
<div class="t" style="left:599.5px;top:227.6px;line-height:14px;height:14px;width:100px;text-align:center;color:#1c1c1c;">Nástroje</div>
<div style="left:729px;top:208.6px;width:1px;height:33px;background:#a5a5a5;"></div>
<div style="left:730px;top:208.6px;width:1px;height:33px;background:#fafafa;"></div>
<svg style="left:737px;top:210.6px" width="14" height="14" viewBox="0 0 16 16"><path d="M2 2h9.500v12h-9.500z" fill="#f4f9ff" stroke="#6fb0ea" stroke-width="1.300"/><path d="M2 2.500h9.500" stroke="#9cc8f0" stroke-width="1.500"/><path d="M5 10.500l5-6 1.500 1.200-5 6-2 .8z" fill="#f3b13a" stroke="#c6831a" stroke-width=".5"/><path d="M10 4.500l1.500 1.200" stroke="#d8452a" stroke-width="1.500"/></svg>
<svg style="left:758px;top:210.6px" width="14" height="14" viewBox="0 0 16 16"><rect x="1.500" y="1" width="11.500" height="14" rx="1.200" fill="#fdf3dc" stroke="#e0a030" stroke-width="1.400"/><path d="M6.500 4.500h4.500M6.500 8h4.500M6.500 11.500h4.500" stroke="#d8952a" stroke-width="1.200"/><path d="M3.500 4.500h1.800M3.500 8h1.800M3.500 11.500h1.800" stroke="#d8952a" stroke-width="1.600"/></svg>
<svg style="left:779px;top:210.6px" width="14" height="14" viewBox="0 0 16 16"><path d="M7 1.500l2.500-1h4v13.500h-6.500z" fill="#d9d9d9" stroke="#8a8a8a" stroke-width=".9"/><path d="M9.500 .500v2.500h4" fill="none" stroke="#8a8a8a" stroke-width=".7"/><circle cx="6.500" cy="9.500" r="5.800" fill="#14286e"/><circle cx="6.500" cy="9.500" r="4.300" fill="#2a5fc8"/><path d="M6.500 9.500l-5-2.800a5.800 5.800 0 0 1 5-3z" fill="#8fb4f0"/><path d="M6.500 9.500l5 2.800a5.800 5.800 0 0 1-5 3z" fill="#5b3fb0"/><circle cx="6.500" cy="9.500" r="1.700" fill="#eef2fc"/><circle cx="6.500" cy="9.500" r=".700" fill="#555"/></svg>
<svg style="left:795px;top:216.6px" width="7" height="4" viewBox="0 0 7 4"><path d="M0 0h7L3.5 4z" fill="#555"/></svg>
<div class="t" style="left:718.5px;top:227.6px;line-height:14px;height:14px;width:100px;text-align:center;color:#1c1c1c;">Připojit</div>
<div style="left:807px;top:208.6px;width:1px;height:33px;background:#a5a5a5;"></div>
<div style="left:808px;top:208.6px;width:1px;height:33px;background:#fafafa;"></div>
<svg style="left:814px;top:210.6px" width="14" height="14" viewBox="0 0 16 16"><path d="M2.500 1.500h9.500v13h-9.500z" fill="#f6fbf4" stroke="#6ab868" stroke-width="1.300"/><path d="M7 2.500h4v5h-4z" fill="#fff"/><path d="M1.300 3.800h3.200" stroke="#d03030" stroke-width="1.700"/><path d="M5.300 7.800l5 5.500M10.300 7.800l-5 5.500" stroke="#2e8a3e" stroke-width="1.500"/></svg>
<svg style="left:829px;top:216.6px" width="7" height="4" viewBox="0 0 7 4"><path d="M0 0h7L3.5 4z" fill="#555"/></svg>
<svg style="left:844px;top:210.6px" width="14" height="14" viewBox="0 0 16 16"><path d="M5.500 1.500l6.500-1 1.500 5.500h-9.500z" fill="#fbfbfb" stroke="#8a8a8a" stroke-width=".8"/><path d="M1 8l2.500-3h10l1.800 2.500v4.500l-2 2.300h-10.300l-2-2.300z" fill="#5a6068"/><path d="M2 8l2-2.300h9l1.300 1.800z" fill="#9aa0a8"/><path d="M2.500 11l6 .800-1.200 3.700h-5.300z" fill="#38b6e8"/><path d="M9.500 10.500h4.800" stroke="#2a2e33" stroke-width="1.400"/><path d="M11 5.500l3 2.500" stroke="#c8ccd0" stroke-width=".8"/></svg>
<svg style="left:859px;top:216.6px" width="7" height="4" viewBox="0 0 7 4"><path d="M0 0h7L3.5 4z" fill="#555"/></svg>
<div class="t" style="left:790px;top:227.6px;line-height:14px;height:14px;width:100px;text-align:center;color:#1c1c1c;">Výstupy</div>
<div style="left:872px;top:208.6px;width:1px;height:33px;background:#a5a5a5;"></div>
<div style="left:873px;top:208.6px;width:1px;height:33px;background:#fafafa;"></div>
<svg style="left:879px;top:210.6px" width="14" height="14" viewBox="0 0 16 16"><path d="M1 1.500h3.500l3.500 6-3.500 6h-3.500l3.500-6z" fill="#2f8ad8"/><path d="M5 1.500h3.500l3.500 6-3.500 6h-3.500l3.500-6z" fill="#2f8ad8"/><path d="M9 1.500h3l3.500 6-3.500 6h-3l3.500-6z" fill="#f2b21c"/></svg>
<svg style="left:894px;top:216.6px" width="7" height="4" viewBox="0 0 7 4"><path d="M0 0h7L3.5 4z" fill="#555"/></svg>
<div class="t" style="left:844px;top:227.6px;line-height:14px;height:14px;width:100px;text-align:center;color:#1c1c1c;">Nabídka</div>
<div style="left:915px;top:208.6px;width:1px;height:33px;background:#a5a5a5;"></div>
<div style="left:916px;top:208.6px;width:1px;height:33px;background:#fafafa;"></div>
<svg style="left:923px;top:210.6px" width="14" height="14" viewBox="0 0 16 16"><path d="M4 8.500l4-3.800 4 3.800v3h-8z" fill="#f6f1ee"/><path d="M7 7.500h2v2h-2z" fill="#b9b4c4"/><path d="M1.300 9l6.700-6.300 6.700 6.300" fill="none" stroke="#e0603a" stroke-width="2.300" stroke-linejoin="miter"/><path d="M11 2.200h1.800v3.300l-1.800-1.700z" fill="#e0603a"/><path d="M1 12.300c2.500-1.800 4.500-1.300 6.500 0s4.500 1.800 7.500-.5" fill="none" stroke="#2a6aa8" stroke-width="1.900"/><path d="M3 14.300c2-.8 3.500-.3 5 .5s4 .5 6-1.200" fill="none" stroke="#1d4a74" stroke-width="1.400"/></svg>
<div class="t" style="left:939px;top:211.1px;line-height:14px;height:14px;color:#1c1c1c;">Objekt</div>
<svg style="left:976px;top:210.6px" width="14" height="14" viewBox="0 0 16 16"><path d="M1.500 9.500l6-6.500" fill="none" stroke="#e0603a" stroke-width="2.400"/><path d="M4.500 9l3.500-3.500v4.500z" fill="#f0ece8"/><path d="M7.300 1.500l2.700 8.500h-2.700z" fill="#2a2a2a"/><path d="M9 1l1.200 2.500 2.800-.5-1.500 2.500 2.500 2-3 .300.500 2.700-2.700-2z" fill="#2fb0e0"/><path d="M1.500 12.500c2-1.500 4-1.200 6-.2" fill="none" stroke="#2a5fa8" stroke-width="1.800"/><path d="M8 9.500c.5 3 2.500 4.500 5.500 3.500-1.500 2.500-6 2.500-7-1z" fill="#f0b83a"/><path d="M7 13.800c1.500 1 3.500 1.200 5 .2" fill="none" stroke="#d0602a" stroke-width="1"/></svg>
<div class="t" style="left:992.5px;top:211.1px;line-height:14px;height:14px;color:#1c1c1c;">Objekty</div>
<div class="t" style="left:926px;top:227.6px;line-height:14px;height:14px;width:100px;text-align:center;color:#1c1c1c;">Další</div>
<div style="left:915px;top:205px;width:129px;height:38px;border:3px solid #ff0000;"></div>
<div style="left:425px;top:243px;width:1276px;height:2px;background:linear-gradient(#c8c8c8,#707070);"></div>
<div style="left:425px;top:245px;width:1260px;height:48px;background:#8c8c8c;"></div>
<div style="left:425px;top:293px;width:1260px;height:15px;background:#9c9c9c;"></div>
<div style="left:426px;top:245px;width:150px;height:16px;background:#f0f0f0;border-left:1px solid #fff;border-top:1px solid #fff;overflow:hidden;"></div>
<div class="b" style="left:427.5px;top:246px;line-height:14px;height:14px;">Druh platby</div>
<div style="left:426px;top:263px;width:150px;height:14px;background:#e1e1e1;overflow:hidden;"></div>
<div class="t" style="left:430px;top:263px;line-height:14px;height:14px;color:#1a1a1a;">Začíná na</div>
<svg style="left:562px;top:268.0px" width="8" height="5" viewBox="0 0 8 5"><path d="M.5 .5L4.0 4L7.5 .5" fill="none" stroke="#555" stroke-width="1.1"/></svg>
<div style="left:426px;top:278px;width:152px;height:14px;background:#ffffb0;border-right:1px solid #949494;"></div>
<div style="left:426px;top:293px;width:151px;height:14px;background:#bfcddb;"></div>
<div class="t" style="left:428px;top:293px;line-height:14px;height:14px;color:#000;">100</div>
<div style="left:578px;top:245px;width:326px;height:16px;background:#f0f0f0;border-left:1px solid #fff;border-top:1px solid #fff;overflow:hidden;"></div>
<div class="b" style="left:579.5px;top:246px;line-height:14px;height:14px;">Účel platby</div>
<div style="left:578px;top:263px;width:326px;height:14px;background:#e1e1e1;overflow:hidden;"></div>
<div class="t" style="left:582px;top:263px;line-height:14px;height:14px;color:#1a1a1a;">Začíná na</div>
<svg style="left:890px;top:268.0px" width="8" height="5" viewBox="0 0 8 5"><path d="M.5 .5L4.0 4L7.5 .5" fill="none" stroke="#555" stroke-width="1.1"/></svg>
<div style="left:578px;top:278px;width:328px;height:14px;background:#ffffb0;border-right:1px solid #949494;"></div>
<div style="left:578px;top:293px;width:327px;height:14px;background:#bfcddb;"></div>
<div class="t" style="left:580px;top:293px;line-height:14px;height:14px;color:#000;">V-Pokladna výdej <span style="font-size:10.3px;letter-spacing:-0.88px">UNIVERZAL</span></div>
<div style="left:906px;top:245px;width:113px;height:16px;background:#f0f0f0;border-left:1px solid #fff;border-top:1px solid #fff;overflow:hidden;"></div>
<div class="b" style="left:907.5px;top:246px;line-height:14px;height:14px;">Obnos</div>
<div style="left:906px;top:263px;width:113px;height:14px;background:#e1e1e1;overflow:hidden;"></div>
<div class="t" style="left:910px;top:263px;line-height:14px;height:14px;color:#1a1a1a;">Stejné</div>
<svg style="left:1005px;top:268.0px" width="8" height="5" viewBox="0 0 8 5"><path d="M.5 .5L4.0 4L7.5 .5" fill="none" stroke="#555" stroke-width="1.1"/></svg>
<div style="left:906px;top:278px;width:115px;height:14px;background:#ffffb0;border-right:1px solid #949494;"></div>
<div style="left:906px;top:293px;width:114px;height:14px;background:#bfcddb;"></div>
<div class="t" style="left:906px;top:293px;line-height:14px;height:14px;width:111px;text-align:right;color:#000;">2 448,00</div>
<div style="left:1021px;top:245px;width:211px;height:16px;background:#f0f0f0;border-left:1px solid #fff;border-top:1px solid #fff;overflow:hidden;"></div>
<div class="b" style="left:1022.5px;top:246px;line-height:14px;height:14px;">Variabilní symbol</div>
<div style="left:1021px;top:263px;width:211px;height:14px;background:#e1e1e1;overflow:hidden;"></div>
<div class="t" style="left:1025px;top:263px;line-height:14px;height:14px;color:#1a1a1a;">Stejné</div>
<svg style="left:1218px;top:268.0px" width="8" height="5" viewBox="0 0 8 5"><path d="M.5 .5L4.0 4L7.5 .5" fill="none" stroke="#555" stroke-width="1.1"/></svg>
<div style="left:1021px;top:278px;width:213px;height:14px;background:#ffffb0;border-right:1px solid #949494;"></div>
<div style="left:1021px;top:293px;width:212px;height:14px;background:#bfcddb;"></div>
<div style="left:1234px;top:245px;width:344px;height:16px;background:#f0f0f0;border-left:1px solid #fff;border-top:1px solid #fff;overflow:hidden;"></div>
<div class="b" style="left:1235.5px;top:246px;line-height:14px;height:14px;">Poznámka</div>
<div style="left:1234px;top:263px;width:344px;height:14px;background:#e1e1e1;overflow:hidden;"></div>
<div class="t" style="left:1238px;top:263px;line-height:14px;height:14px;color:#1a1a1a;">Začíná na</div>
<svg style="left:1564px;top:268.0px" width="8" height="5" viewBox="0 0 8 5"><path d="M.5 .5L4.0 4L7.5 .5" fill="none" stroke="#555" stroke-width="1.1"/></svg>
<div style="left:1234px;top:278px;width:346px;height:14px;background:#ffffb0;border-right:1px solid #949494;"></div>
<div style="left:1234px;top:293px;width:345px;height:14px;background:#bfcddb;"></div>
<div class="t" style="left:1236px;top:293px;line-height:14px;height:14px;color:#000;">Káva</div>
<div style="left:1580px;top:245px;width:103px;height:16px;background:#f0f0f0;border-left:1px solid #fff;border-top:1px solid #fff;overflow:hidden;"></div>
<div class="b" style="left:1581.5px;top:246px;line-height:14px;height:14px;">Storno</div>
<div style="left:1580px;top:263px;width:103px;height:14px;background:#e1e1e1;overflow:hidden;"></div>
<div class="t" style="left:1584px;top:263px;line-height:14px;height:14px;color:#1a1a1a;">Bez výběru</div>
<svg style="left:1669px;top:268.0px" width="8" height="5" viewBox="0 0 8 5"><path d="M.5 .5L4.0 4L7.5 .5" fill="none" stroke="#555" stroke-width="1.1"/></svg>
<div style="left:1580px;top:278px;width:105px;height:14px;background:#ffffb0;border-right:1px solid #949494;"></div>
<div style="left:1580px;top:293px;width:104px;height:14px;background:#bfcddb;"></div>
<div style="left:1586px;top:295px;width:10px;height:10px;background:linear-gradient(135deg,#dcdcdc,#fafafa);border:1px solid #999a9a;box-shadow:inset 0 0 0 1px #f4f4f4;"></div>
<div style="left:1685px;top:245px;width:16px;height:83px;background:#f0f0f0;"></div>
<div style="left:1684px;top:245px;width:1px;height:83px;background:#a0a0a0;"></div>
<div style="left:1685px;top:328px;width:16px;height:1px;background:#f0f0f0;"></div>
<svg style="left:1688.5px;top:250.5px" width="9" height="6" viewBox="0 0 9 6"><path d="M.5 5L4.5 .5L8.5 5" fill="none" stroke="#444" stroke-width="1.4"/></svg>
<svg style="left:1688.5px;top:317.5px" width="9" height="6" viewBox="0 0 9 6"><path d="M.5 .5L4.5 5L8.5 .5" fill="none" stroke="#444" stroke-width="1.4"/></svg>
<div style="left:1686px;top:262px;width:15px;height:7px;background:#c9c9c9;"></div>
<div style="left:427px;top:339px;width:1254px;height:122px;border:1px solid #c2d2e4;border-radius:4px;box-shadow:inset 1px 1px 0 #fbfcfe;"></div>
<div class="t" style="left:436px;top:356.5px;line-height:14px;height:14px;">Druh platby</div>
<div style="left:496px;top:354px;width:131px;height:19px;background:#e7e7e7;border:1px solid #b2b2b2;"></div>
<div style="left:615px;top:354px;width:12px;height:19px;background:#9c9c9c;border:1px solid #8a8a8a;"></div>
<svg style="left:618px;top:359.5px" width="7" height="9" viewBox="0 0 7 9"><path d="M3.500 0v5M1 3.500l2.500 2.500 2.500-2.500M.5 8h6" fill="none" stroke="#b6b6b6" stroke-width="1.3"/></svg>
<div class="t" style="left:499px;top:357px;line-height:14px;height:14px;">100</div>
<div class="t" style="left:436px;top:376.5px;line-height:14px;height:14px;">Poplatník</div>
<div style="left:496px;top:374px;width:361px;height:19px;background:#e7e7e7;border:1px solid #b2b2b2;"></div>
<div style="left:845px;top:374px;width:12px;height:19px;background:#9c9c9c;border:1px solid #8a8a8a;"></div>
<svg style="left:848px;top:379.5px" width="7" height="9" viewBox="0 0 7 9"><path d="M3.500 0v5M1 3.500l2.500 2.500 2.500-2.500M.5 8h6" fill="none" stroke="#b6b6b6" stroke-width="1.3"/></svg>
<div class="t" style="left:499px;top:377px;line-height:14px;height:14px;">11 - Kostolányiová Jana</div>
<div class="t" style="left:436px;top:396.5px;line-height:14px;height:14px;">Účel platby</div>
<div style="left:496px;top:394px;width:631px;height:19px;background:#e7e7e7;border:1px solid #b2b2b2;"></div>
<div class="t" style="left:499px;top:397px;line-height:14px;height:14px;">V-Pokladna výdej <span style="font-size:10.3px;letter-spacing:-0.88px">UNIVERZAL</span></div>
<div class="t" style="left:436px;top:416.5px;line-height:14px;height:14px;">Obnos</div>
<div style="left:496px;top:414px;width:141px;height:19px;background:#e7e7e7;border:1px solid #b2b2b2;"></div>
<div class="b" style="left:496px;top:417px;line-height:14px;height:14px;width:137px;text-align:right;font-size:12px;letter-spacing:0.3px;">2 448,00</div>
<div class="b" style="left:645px;top:415.5px;line-height:14px;height:14px;color:#960096;letter-spacing:0.1px;">CZK</div>
<div class="t" style="left:706px;top:416.5px;line-height:14px;height:14px;">Kurz</div>
<div style="left:745px;top:414px;width:81px;height:19px;background:#e7e7e7;border:1px solid #b2b2b2;"></div>
<div style="left:814px;top:414px;width:12px;height:19px;background:#9c9c9c;border:1px solid #8a8a8a;"></div>
<svg style="left:817px;top:419.5px" width="7" height="9" viewBox="0 0 7 9"><path d="M3.500 0v5M1 3.500l2.500 2.500 2.500-2.500M.5 8h6" fill="none" stroke="#b6b6b6" stroke-width="1.3"/></svg>
<div class="t" style="left:745px;top:417px;line-height:14px;height:14px;width:65px;text-align:right;">1,0000</div>
<div class="t" style="left:896px;top:416.5px;line-height:14px;height:14px;">Sazba daně</div>
<div style="left:965px;top:414px;width:72px;height:19px;background:#cccccc;border:1px solid #bcbcbc;"></div>
<svg style="left:1023px;top:421.5px" width="9" height="5.5" viewBox="0 0 9 5.5"><path d="M.5 .5L4.5 4.5L8.5 .5" fill="none" stroke="#a6a6a6" stroke-width="1.1"/></svg>
<div class="t" style="left:436px;top:436.5px;line-height:14px;height:14px;">Základ</div>
<div style="left:496px;top:434px;width:141px;height:19px;background:#e7e7e7;border:1px solid #b2b2b2;"></div>
<div class="t" style="left:496px;top:437px;line-height:14px;height:14px;width:137px;text-align:right;">2 448,00</div>
<div class="t" style="left:645px;top:436.5px;line-height:14px;height:14px;">Daň</div>
<div style="left:676px;top:434px;width:141px;height:19px;background:#e7e7e7;border:1px solid #b2b2b2;"></div>
<div class="t" style="left:676px;top:437px;line-height:14px;height:14px;width:137px;text-align:right;">0,00</div>
<div style="left:839px;top:436px;width:11px;height:11px;background:#f6f6f6;border:1px solid #bdbdbd;"></div>
<div class="t" style="left:853px;top:434px;line-height:14px;height:14px;color:#6a6a6a;">Poměrem</div>
<div class="t" style="left:925px;top:436.5px;line-height:14px;height:14px;">Procento poměru</div>
<div style="left:1056px;top:434px;width:71px;height:19px;background:#e7e7e7;border:1px solid #b2b2b2;"></div>
<div class="t" style="left:875px;top:356.5px;line-height:14px;height:14px;">VS</div>
<div style="left:905px;top:354px;width:121px;height:19px;background:#e7e7e7;border:1px solid #b2b2b2;"></div>
<div style="left:1014px;top:354px;width:12px;height:19px;background:#9c9c9c;border:1px solid #8a8a8a;"></div>
<svg style="left:1017px;top:359.5px" width="7" height="9" viewBox="0 0 7 9"><path d="M3.500 0v5M1 3.500l2.500 2.500 2.500-2.500M.5 8h6" fill="none" stroke="#b6b6b6" stroke-width="1.3"/></svg>
<div style="left:1037px;top:354px;width:90px;height:18px;background:#e1e1e1;border:1px solid #adadad;"></div>
<div class="t" style="left:1037px;top:356px;line-height:14px;height:14px;width:90px;text-align:center;">Přiřadit doklad</div>
<div class="t" style="left:875px;top:376.5px;line-height:14px;height:14px;">Daň. skupina</div>
<div style="left:965px;top:374px;width:61px;height:19px;background:#e7e7e7;border:1px solid #b2b2b2;"></div>
<div style="left:1014px;top:374px;width:12px;height:19px;background:#9c9c9c;border:1px solid #8a8a8a;"></div>
<svg style="left:1017px;top:379.5px" width="7" height="9" viewBox="0 0 7 9"><path d="M3.500 0v5M1 3.500l2.500 2.500 2.500-2.500M.5 8h6" fill="none" stroke="#b6b6b6" stroke-width="1.3"/></svg>
<div style="left:1137px;top:351px;width:257px;height:100px;border:1px solid #c2d2e4;border-radius:4px;box-shadow:inset 1px 1px 0 #fbfcfe, 1px 1px 0 #fbfcfe;"></div>
<div class="b" style="left:1143px;top:346px;height:14px;line-height:14px;padding:0 3px 0 2px;background:#f0f0f0;letter-spacing:0.15px;font-size:13px;letter-spacing:0.3px;height:18px;line-height:18px;top:344px;">Součty za doklad</div>
<div class="t" style="left:1146px;top:367px;line-height:14px;height:14px;">Doklad celkem</div>
<div style="left:1236px;top:364px;width:151px;height:19px;background:#e7e7e7;border:1px solid #b2b2b2;"></div>
<div class="t" style="left:1236px;top:367px;line-height:14px;height:14px;width:147px;text-align:right;">2 448,00</div>
<div class="t" style="left:1146px;top:397px;line-height:14px;height:14px;">Položky celkem</div>
<div style="left:1236px;top:394px;width:151px;height:19px;background:#e7e7e7;border:1px solid #b2b2b2;"></div>
<div class="t" style="left:1236px;top:397px;line-height:14px;height:14px;width:147px;text-align:right;">2 448,00</div>
<div class="t" style="left:1146px;top:427px;line-height:14px;height:14px;">Rozdíl</div>
<div style="left:1236px;top:424px;width:151px;height:19px;background:#e7e7e7;border:1px solid #b2b2b2;"></div>
<div style="left:1684px;top:334px;width:17px;height:370px;background:#f0f0f0;"></div>
<svg style="left:1688px;top:339.5px" width="9" height="6" viewBox="0 0 9 6"><path d="M.5 5L4.5 .5L8.5 5" fill="none" stroke="#444" stroke-width="1.4"/></svg>
<div style="left:1685px;top:350px;width:16px;height:350px;background:#c9c9c9;"></div>
<div style="left:427px;top:466px;width:54px;height:17px;border:1px solid #e2e2e2;"></div>
<svg style="left:431.5px;top:467.5px" width="14" height="14" viewBox="0 0 16 16"><path d="M4 1.500h8v5h-8z" fill="#fff" stroke="#2a6fc0" stroke-width="1"/><path d="M1 6.500h14v6.500h-14z" fill="#2f7fd8"/><path d="M1 6.500h14v2.200h-14z" fill="#6ab0f0"/><path d="M3.500 10.500h9v4h-9z" fill="#e8f2fc" stroke="#2a6fc0" stroke-width=".8"/><path d="M1 13h14" stroke="#1b4f9a" stroke-width="1"/></svg>
<div class="b" style="left:448px;top:467.5px;line-height:14px;height:14px;font-size:9.5px;letter-spacing:-0.1px;">Základ</div>
<div style="left:481px;top:465px;width:81px;height:21px;background:#fff;"></div>
<div style="left:427px;top:483px;width:1255px;height:3px;background:#fff;"></div>
<svg style="left:485.5px;top:466.5px" width="14" height="14" viewBox="0 0 16 16"><path d="M1 1h3v13.500h-3z" fill="#f08a24"/><path d="M4.400 1h3v13.500h-3z" fill="#3a8ee0"/><path d="M7.800 1h3v13.500h-3z" fill="#1b3f8a"/><path d="M11.200 1h3v13.500h-3z" fill="#2f9a44"/><path d="M1.600 1.600h1.800v8h-1.800zM5 1.600h1.800v8h-1.800zM8.400 1.600h1.800v8h-1.800zM11.800 1.600h1.800v8h-1.800z" fill="#fff"/><path d="M.5 .8h14.500" stroke="#888" stroke-width=".8"/></svg>
<div class="b" style="left:502.5px;top:466.5px;line-height:14px;height:14px;font-size:9.5px;letter-spacing:-0.1px;">Rozúčtování</div>
<div style="left:427px;top:486px;width:1255px;height:230px;border:3px solid #bccbdd;"></div>
<div style="left:430px;top:488px;width:1249px;height:230px;border:1px solid #8c8c8c;"></div>
<div style="left:431px;top:489px;width:1247px;height:1px;background:#fbfbfb;"></div>
<div style="left:432px;top:490px;width:1px;height:33px;background:#a5a5a5;"></div>
<div style="left:433px;top:490px;width:1px;height:33px;background:#fafafa;"></div>
<svg style="left:447px;top:492px" width="14" height="14" viewBox="0 0 16 16"><path d="M2 1.5h11M2 3.8h11" stroke="#222" stroke-width="1.3"/><path d="M3 6h9" stroke="#555" stroke-width="1"/><ellipse cx="7.5" cy="10.5" rx="6" ry="3.6" fill="#e9d36a" stroke="#9a7d1c" stroke-width="1"/><circle cx="7.5" cy="10.6" r="2.6" fill="#1d4f7a"/><circle cx="7.5" cy="10.6" r="1.1" fill="#0a1a28"/><path d="M11.5 7.5l2-1" stroke="#b33" stroke-width="1.2"/></svg>
<svg style="left:463px;top:498px" width="7" height="4" viewBox="0 0 7 4"><path d="M0 0h7L3.5 4z" fill="#555"/></svg>
<div class="t" style="left:408.5px;top:509px;line-height:14px;height:14px;width:100px;text-align:center;color:#1c1c1c;">Zobrazení</div>
<div style="left:484px;top:490px;width:1px;height:33px;background:#a5a5a5;"></div>
<div style="left:485px;top:490px;width:1px;height:33px;background:#fafafa;"></div>
<svg style="left:491px;top:492px" width="14" height="14" viewBox="0 0 16 16"><path d="M2.5 1.5h8.5v12h-8.5z" fill="#fff" stroke="#3b8fd6" stroke-width="1.4"/><path d="M7 8l4.5 4.8" stroke="#e8742a" stroke-width="2"/><path d="M10.8 12l1.4 1.6" stroke="#8a3a10" stroke-width="1.6"/></svg>
<svg style="left:511.5px;top:492px" width="14" height="14" viewBox="0 0 16 16"><path d="M2.5 1.5h9v12h-9z" fill="#fff" stroke="#3b8fd6" stroke-width="1.4"/><path d="M4 3h6.5v6h-6.5z" fill="#f6c433"/><path d="M7.5 8l4 4.5" stroke="#e8742a" stroke-width="2.2"/></svg>
<svg style="left:534px;top:492px" width="14" height="14" viewBox="0 0 16 16"><path d="M3.5 5h8l-.6 9.5h-6.8z" fill="#e3ae2d" stroke="#b58417" stroke-width="1"/><path d="M2.8 4h9.4" stroke="#b58417" stroke-width="1.6"/><path d="M6 2.5h3" stroke="#b58417" stroke-width="1.4"/><path d="M6 7v6M9 7v6" stroke="#c6931f" stroke-width="1"/></svg>
<svg style="left:556px;top:492px" width="14" height="14" viewBox="0 0 16 16"><path d="M1.5 1.5h7v11h-7z" fill="#fff" stroke="#3b8fd6" stroke-width="1.3"/><path d="M4.5 3h8v11h-8z" fill="#fff" stroke="#3b8fd6" stroke-width="1.3"/><path d="M8.5 9l4 4.6" stroke="#e8742a" stroke-width="2"/></svg>
<div class="t" style="left:480.5px;top:509px;line-height:14px;height:14px;width:100px;text-align:center;color:#1c1c1c;">Úpravy</div>
<div style="left:576px;top:490px;width:1px;height:33px;background:#a5a5a5;"></div>
<div style="left:577px;top:490px;width:1px;height:33px;background:#fafafa;"></div>
<div style="left:579px;top:491px;width:23px;height:15px;background:#ffff70;border:1px solid #f01010;"></div>
<svg style="left:581px;top:492px" width="14" height="14" viewBox="0 0 16 16"><path d="M0 2h13M0 4.5h13M0 7h13M0 9.5h13M0 12h13M0 14.5h13" stroke="#222" stroke-width="1.1"/><circle cx="5" cy="6.5" r="2" fill="#f28c28"/><path d="M1.5 14c0-4 1.5-5.5 3.5-5.5s3.5 1.5 3.5 5.5z" fill="#f28c28"/><circle cx="10" cy="3.2" r="1.9" fill="#3aa0e0"/><path d="M7.2 11c0-4 1.2-5.6 2.8-5.6s2.8 1.6 2.8 5.600z" fill="#3aa0e0"/></svg>
<svg style="left:595px;top:498px" width="7" height="4" viewBox="0 0 7 4"><path d="M0 0h7L3.5 4z" fill="#555"/></svg>
<svg style="left:608px;top:492px" width="14" height="14" viewBox="0 0 16 16"><path d="M1.500 3h12l-4.500 5.500v5.500l-3-1.200v-4.300z" fill="#2f8ad1"/><ellipse cx="7.500" cy="3" rx="6" ry="1.800" fill="#6db8ea" stroke="#2a78b8" stroke-width=".8"/><path d="M3 3.800c3 1 6 1 9 0" stroke="#e8c040" stroke-width=".8" fill="none"/></svg>
<svg style="left:622px;top:498px" width="7" height="4" viewBox="0 0 7 4"><path d="M0 0h7L3.5 4z" fill="#555"/></svg>
<svg style="left:636px;top:492px" width="14" height="14" viewBox="0 0 16 16"><path d="M3 1.500h6v6h-6z" fill="none" stroke="#5b8fd0" stroke-width="1.5"/><path d="M1 8h9v4.500h-9z" fill="#7fa6dc" stroke="#4a78ba" stroke-width="1"/><path d="M6 6.500h7.500v7h-7.500z" fill="none" stroke="#f0a060" stroke-width="1.500"/></svg>
<svg style="left:658px;top:492px" width="14" height="14" viewBox="0 0 16 16"><path d="M1 4h12v10.500h-12z" fill="#1f7fd0"/><circle cx="7" cy="9.500" r="3.600" fill="#fff"/><path d="M7 7.500v2.200l1.600 1" stroke="#333" stroke-width="1" fill="none"/><path d="M5 4.500c1-3 5-4 7-1.500l1.500-1v4.500h-4.500l1.500-1.500c-1.500-1.500-3.500-1-4 1z" fill="#f5b921" stroke="#c98a10" stroke-width=".5"/></svg>
<svg style="left:673px;top:498px" width="7" height="4" viewBox="0 0 7 4"><path d="M0 0h7L3.5 4z" fill="#555"/></svg>
<svg style="left:687px;top:492px" width="14" height="14" viewBox="0 0 16 16"><rect x="1" y="1" width="13" height="13.500" rx="1.500" fill="#fdf3dc" stroke="#e0a030" stroke-width="1.500"/><path d="M5 3.500v9M10 3.500v9" stroke="#d8952a" stroke-width="1.200"/><circle cx="5" cy="9" r="1.700" fill="#fdf3dc" stroke="#d8952a" stroke-width="1.200"/><circle cx="10" cy="5.500" r="1.700" fill="#fdf3dc" stroke="#d8952a" stroke-width="1.200"/></svg>
<svg style="left:710px;top:492px" width="14" height="14" viewBox="0 0 16 16"><circle cx="7.500" cy="7.800" r="6.500" fill="#1e9be0"/><text x="7.500" y="11.600" font-size="11" font-weight="bold" text-anchor="middle" fill="#fff" font-family="Liberation Sans,sans-serif">?</text></svg>
<div class="t" style="left:602.5px;top:509px;line-height:14px;height:14px;width:100px;text-align:center;color:#1c1c1c;">Nástroje</div>
<div style="left:729px;top:490px;width:1px;height:33px;background:#a5a5a5;"></div>
<div style="left:730px;top:490px;width:1px;height:33px;background:#fafafa;"></div>
<svg style="left:737px;top:492px" width="14" height="14" viewBox="0 0 16 16"><path d="M2 2h9.500v12h-9.500z" fill="#f4f9ff" stroke="#6fb0ea" stroke-width="1.300"/><path d="M2 2.500h9.500" stroke="#9cc8f0" stroke-width="1.500"/><path d="M5 10.500l5-6 1.500 1.200-5 6-2 .8z" fill="#f3b13a" stroke="#c6831a" stroke-width=".5"/><path d="M10 4.500l1.500 1.200" stroke="#d8452a" stroke-width="1.500"/></svg>
<svg style="left:758px;top:492px" width="14" height="14" viewBox="0 0 16 16"><rect x="1.500" y="1" width="11.500" height="14" rx="1.200" fill="#fdf3dc" stroke="#e0a030" stroke-width="1.400"/><path d="M6.500 4.500h4.500M6.500 8h4.500M6.500 11.500h4.500" stroke="#d8952a" stroke-width="1.200"/><path d="M3.500 4.500h1.800M3.500 8h1.800M3.500 11.500h1.800" stroke="#d8952a" stroke-width="1.600"/></svg>
<div class="t" style="left:703.5px;top:509px;line-height:14px;height:14px;width:100px;text-align:center;color:#1c1c1c;">Připojit</div>
<div style="left:777px;top:490px;width:1px;height:33px;background:#a5a5a5;"></div>
<div style="left:778px;top:490px;width:1px;height:33px;background:#fafafa;"></div>
<svg style="left:784px;top:492px" width="14" height="14" viewBox="0 0 16 16"><path d="M2.500 1.500h9.500v13h-9.500z" fill="#f6fbf4" stroke="#6ab868" stroke-width="1.300"/><path d="M7 2.500h4v5h-4z" fill="#fff"/><path d="M1.300 3.800h3.200" stroke="#d03030" stroke-width="1.700"/><path d="M5.300 7.800l5 5.500M10.300 7.800l-5 5.500" stroke="#2e8a3e" stroke-width="1.500"/></svg>
<svg style="left:799px;top:498px" width="7" height="4" viewBox="0 0 7 4"><path d="M0 0h7L3.5 4z" fill="#555"/></svg>
<svg style="left:814px;top:492px" width="14" height="14" viewBox="0 0 16 16"><path d="M5.500 1.500l6.500-1 1.500 5.500h-9.500z" fill="#fbfbfb" stroke="#8a8a8a" stroke-width=".8"/><path d="M1 8l2.500-3h10l1.800 2.500v4.500l-2 2.300h-10.300l-2-2.300z" fill="#5a6068"/><path d="M2 8l2-2.300h9l1.300 1.800z" fill="#9aa0a8"/><path d="M2.500 11l6 .800-1.200 3.700h-5.300z" fill="#38b6e8"/><path d="M9.500 10.500h4.800" stroke="#2a2e33" stroke-width="1.400"/><path d="M11 5.500l3 2.500" stroke="#c8ccd0" stroke-width=".8"/></svg>
<svg style="left:829px;top:498px" width="7" height="4" viewBox="0 0 7 4"><path d="M0 0h7L3.5 4z" fill="#555"/></svg>
<div class="t" style="left:760px;top:509px;line-height:14px;height:14px;width:100px;text-align:center;color:#1c1c1c;">Výstupy</div>
<div style="left:842px;top:490px;width:1px;height:33px;background:#a5a5a5;"></div>
<div style="left:843px;top:490px;width:1px;height:33px;background:#fafafa;"></div>
<svg style="left:849px;top:492px" width="14" height="14" viewBox="0 0 16 16"><path d="M1 1.500h3.500l3.500 6-3.500 6h-3.500l3.500-6z" fill="#2f8ad8"/><path d="M5 1.500h3.500l3.500 6-3.500 6h-3.500l3.500-6z" fill="#2f8ad8"/><path d="M9 1.500h3l3.500 6-3.500 6h-3l3.500-6z" fill="#f2b21c"/></svg>
<svg style="left:864px;top:498px" width="7" height="4" viewBox="0 0 7 4"><path d="M0 0h7L3.5 4z" fill="#555"/></svg>
<div class="t" style="left:814px;top:509px;line-height:14px;height:14px;width:100px;text-align:center;color:#1c1c1c;">Nabídka</div>
<div style="left:885px;top:490px;width:1px;height:33px;background:#a5a5a5;"></div>
<div style="left:886px;top:490px;width:1px;height:33px;background:#fafafa;"></div>
<svg style="left:893px;top:492px" width="14" height="14" viewBox="0 0 16 16"><path d="M2.500 1.500h9v13h-9z" fill="#fff" stroke="#3b8fd6" stroke-width="1.400"/><text x="7" y="11.500" font-size="10" font-weight="bold" text-anchor="middle" fill="#c8202a" font-family="Liberation Sans,sans-serif">s</text></svg>
<div class="t" style="left:909px;top:492.5px;line-height:14px;height:14px;color:#1c1c1c;">Storno</div>
<div style="left:945px;top:492px;width:1px;height:14px;background:#a6a6a6;"></div>
<div style="left:946px;top:492px;width:1px;height:14px;background:#d4d4d4;"></div>
<svg style="left:952px;top:492px" width="14" height="14" viewBox="0 0 16 16"><text x="8" y="14" font-size="17" font-weight="bold" text-anchor="middle" fill="#2c82e4" stroke="#2c82e4" stroke-width="1" font-family="Liberation Sans,sans-serif">G</text><path d="M8.500 12.500c2 1.200 4 .800 5.500-.500" fill="none" stroke="#f0a040" stroke-width="1.200"/></svg>
<div class="t" style="left:968.5px;top:492.5px;line-height:14px;height:14px;color:#1c1c1c;">Generuj <span style="font-size:10.3px;letter-spacing:-0.88px">DPH</span></div>
<div style="left:1033px;top:492px;width:1px;height:14px;background:#a6a6a6;"></div>
<div style="left:1034px;top:492px;width:1px;height:14px;background:#d4d4d4;"></div>
<svg style="left:1040px;top:492px" width="14" height="14" viewBox="0 0 16 16"><path d="M5.200 3.200a6 6 0 1 0 5.300-.600" fill="none" stroke="#1f5fb8" stroke-width="2.600"/><path d="M10 1.200a6.500 6.500 0 0 1 4 6" fill="none" stroke="#6aa8ea" stroke-width="2"/><path d="M1.500 4.800l4.300-3.800.800 4.800z" fill="#123e86"/><circle cx="8.300" cy="8.500" r="3.500" fill="#f59a2a"/><circle cx="7.500" cy="7.600" r="1.100" fill="#fbc878"/></svg>
<div class="t" style="left:1056px;top:492.5px;line-height:14px;height:14px;color:#1c1c1c;">Zaokrouhlit</div>
<div style="left:1112px;top:492px;width:1px;height:14px;background:#a6a6a6;"></div>
<div style="left:1113px;top:492px;width:1px;height:14px;background:#d4d4d4;"></div>
<div style="left:1116px;top:492px;width:1px;height:14px;background:#a6a6a6;"></div>
<div style="left:1117px;top:492px;width:1px;height:14px;background:#d4d4d4;"></div>
<svg style="left:1124px;top:492px" width="14" height="14" viewBox="0 0 16 16"><path d="M4 8.500l4-3.800 4 3.800v3h-8z" fill="#f6f1ee"/><path d="M7 7.500h2v2h-2z" fill="#b9b4c4"/><path d="M1.300 9l6.700-6.300 6.700 6.300" fill="none" stroke="#e0603a" stroke-width="2.300" stroke-linejoin="miter"/><path d="M11 2.200h1.800v3.300l-1.800-1.700z" fill="#e0603a"/><path d="M1 12.300c2.500-1.800 4.500-1.300 6.500 0s4.500 1.800 7.500-.5" fill="none" stroke="#2a6aa8" stroke-width="1.900"/><path d="M3 14.300c2-.8 3.500-.3 5 .5s4 .5 6-1.200" fill="none" stroke="#1d4a74" stroke-width="1.400"/></svg>
<div class="t" style="left:1140px;top:492.5px;line-height:14px;height:14px;color:#1c1c1c;">Objekt</div>
<svg style="left:1178px;top:492px" width="14" height="14" viewBox="0 0 16 16"><path d="M1.500 9.500l6-6.500" fill="none" stroke="#e0603a" stroke-width="2.400"/><path d="M4.500 9l3.500-3.500v4.500z" fill="#f0ece8"/><path d="M7.300 1.500l2.700 8.500h-2.700z" fill="#2a2a2a"/><path d="M9 1l1.200 2.500 2.800-.5-1.500 2.500 2.500 2-3 .300.500 2.700-2.700-2z" fill="#2fb0e0"/><path d="M1.500 12.500c2-1.500 4-1.200 6-.2" fill="none" stroke="#2a5fa8" stroke-width="1.800"/><path d="M8 9.500c.5 3 2.500 4.500 5.500 3.500-1.500 2.500-6 2.500-7-1z" fill="#f0b83a"/><path d="M7 13.800c1.500 1 3.500 1.200 5 .2" fill="none" stroke="#d0602a" stroke-width="1"/></svg>
<div class="t" style="left:1194px;top:492.5px;line-height:14px;height:14px;color:#1c1c1c;">Objekty</div>
<div class="t" style="left:1010px;top:509px;line-height:14px;height:14px;width:100px;text-align:center;color:#1c1c1c;">Další</div>
<div style="left:431px;top:525px;width:1248px;height:2px;background:linear-gradient(#c8c8c8,#707070);"></div>
<div style="left:431px;top:527px;width:1230px;height:53px;background:#8c8c8c;"></div>
<div style="left:431px;top:580px;width:1230px;height:29px;background:#9c9c9c;"></div>
<div style="left:432px;top:527px;width:16px;height:16px;background:#f0f0f0;border-left:1px solid #fff;border-top:1px solid #fff;overflow:hidden;"></div>
<div class="b" style="left:433.5px;top:528px;line-height:14px;height:14px;"><span style="letter-spacing:0.8px">...</span></div>
<div style="left:432px;top:545px;width:16px;height:15px;background:#e1e1e1;overflow:hidden;"></div>
<svg style="left:434px;top:550.5px" width="8" height="5" viewBox="0 0 8 5"><path d="M.5 .5L4.0 4L7.5 .5" fill="none" stroke="#555" stroke-width="1.1"/></svg>
<div style="left:432px;top:561px;width:18px;height:17px;background:#ffffb0;border-right:1px solid #949494;"></div>
<div style="left:432px;top:580px;width:17px;height:13px;background:#bfcddb;"></div>
<div style="left:432px;top:594px;width:17px;height:14px;background:#fff;"></div>
<div style="left:450px;top:527px;width:63px;height:16px;background:#f0f0f0;border-left:1px solid #fff;border-top:1px solid #fff;overflow:hidden;"></div>
<div class="b" style="left:451.5px;top:528px;line-height:14px;height:14px;">Zaúčtová<span style="letter-spacing:0.8px">...</span></div>
<div style="left:450px;top:545px;width:63px;height:15px;background:#e1e1e1;overflow:hidden;"></div>
<div class="t" style="left:454px;top:545.5px;line-height:14px;height:14px;color:#1a1a1a;">Bez vý...</div>
<svg style="left:499px;top:550.5px" width="8" height="5" viewBox="0 0 8 5"><path d="M.5 .5L4.0 4L7.5 .5" fill="none" stroke="#555" stroke-width="1.1"/></svg>
<div style="left:450px;top:561px;width:65px;height:17px;background:#ffffb0;border-right:1px solid #949494;"></div>
<div style="left:450px;top:580px;width:64px;height:13px;background:#bfcddb;"></div>
<div style="left:450px;top:594px;width:64px;height:14px;background:#fff;"></div>
<div style="left:515px;top:527px;width:71px;height:16px;background:#f0f0f0;border-left:1px solid #fff;border-top:1px solid #fff;overflow:hidden;"></div>
<div class="b" style="left:516.5px;top:528px;line-height:14px;height:14px;">Účetní datum</div>
<div style="left:515px;top:545px;width:71px;height:15px;background:#e1e1e1;overflow:hidden;"></div>
<div class="t" style="left:519px;top:545.5px;line-height:14px;height:14px;color:#1a1a1a;">Stejné</div>
<svg style="left:572px;top:550.5px" width="8" height="5" viewBox="0 0 8 5"><path d="M.5 .5L4.0 4L7.5 .5" fill="none" stroke="#555" stroke-width="1.1"/></svg>
<div style="left:515px;top:561px;width:73px;height:17px;background:#ffffb0;border-right:1px solid #949494;"></div>
<div style="left:515px;top:580px;width:72px;height:13px;background:#bfcddb;"></div>
<div class="t" style="left:517px;top:579.5px;line-height:14px;height:14px;color:#000;">07.04.2021</div>
<div style="left:515px;top:594px;width:72px;height:14px;background:#fff;"></div>
<div class="t" style="left:517px;top:594px;line-height:14px;height:14px;color:#000;">07.04.2021</div>
<div style="left:588px;top:527px;width:44px;height:16px;background:#f0f0f0;border-left:1px solid #fff;border-top:1px solid #fff;overflow:hidden;"></div>
<div class="b" style="left:589.5px;top:528px;line-height:14px;height:14px;">Účet</div>
<div style="left:588px;top:545px;width:44px;height:15px;background:#e1e1e1;overflow:hidden;"></div>
<div class="t" style="left:592px;top:545.5px;line-height:14px;height:14px;color:#1a1a1a;">Za...</div>
<svg style="left:618px;top:550.5px" width="8" height="5" viewBox="0 0 8 5"><path d="M.5 .5L4.0 4L7.5 .5" fill="none" stroke="#555" stroke-width="1.1"/></svg>
<div style="left:588px;top:561px;width:46px;height:17px;background:#ffffb0;border-right:1px solid #949494;"></div>
<div style="left:588px;top:580px;width:45px;height:13px;background:#bfcddb;"></div>
<div class="t" style="left:590px;top:579.5px;line-height:14px;height:14px;color:#000;">2610151</div>
<div style="left:588px;top:594px;width:45px;height:14px;background:#fff;"></div>
<div class="t" style="left:590px;top:594px;line-height:14px;height:14px;color:#000;">5130300</div>
<div style="left:634px;top:527px;width:22px;height:16px;background:#f0f0f0;border-left:1px solid #fff;border-top:1px solid #fff;overflow:hidden;"></div>
<div class="b" style="left:635.5px;top:528px;line-height:14px;height:14px;"><span style="letter-spacing:-0.9px">ÚZ</span></div>
<div style="left:634px;top:545px;width:22px;height:15px;background:#e1e1e1;overflow:hidden;"></div>
<div class="t" style="left:638px;top:545.5px;line-height:14px;height:14px;color:#1a1a1a;">.</div>
<svg style="left:642px;top:550.5px" width="8" height="5" viewBox="0 0 8 5"><path d="M.5 .5L4.0 4L7.5 .5" fill="none" stroke="#555" stroke-width="1.1"/></svg>
<div style="left:634px;top:561px;width:24px;height:17px;background:#ffffb0;border-right:1px solid #949494;"></div>
<div style="left:634px;top:580px;width:23px;height:13px;background:#bfcddb;"></div>
<div style="left:634px;top:594px;width:23px;height:14px;background:#fff;"></div>
<div style="left:658px;top:527px;width:31px;height:16px;background:#f0f0f0;border-left:1px solid #fff;border-top:1px solid #fff;overflow:hidden;"></div>
<div class="b" style="left:659.5px;top:528px;line-height:14px;height:14px;"><span style="letter-spacing:-0.9px">ORG</span></div>
<div style="left:658px;top:545px;width:31px;height:15px;background:#e1e1e1;overflow:hidden;"></div>
<div class="t" style="left:662px;top:545.5px;line-height:14px;height:14px;color:#1a1a1a;">...</div>
<svg style="left:675px;top:550.5px" width="8" height="5" viewBox="0 0 8 5"><path d="M.5 .5L4.0 4L7.5 .5" fill="none" stroke="#555" stroke-width="1.1"/></svg>
<div style="left:658px;top:561px;width:33px;height:17px;background:#ffffb0;border-right:1px solid #949494;"></div>
<div style="left:658px;top:580px;width:32px;height:13px;background:#bfcddb;"></div>
<div style="left:658px;top:594px;width:32px;height:14px;background:#fff;"></div>
<div style="left:691px;top:527px;width:29px;height:16px;background:#f0f0f0;border-left:1px solid #fff;border-top:1px solid #fff;overflow:hidden;"></div>
<div class="b" style="left:692.5px;top:528px;line-height:14px;height:14px;"><span style="letter-spacing:-0.9px">KAP</span></div>
<div style="left:691px;top:545px;width:29px;height:15px;background:#e1e1e1;overflow:hidden;"></div>
<div class="t" style="left:695px;top:545.5px;line-height:14px;height:14px;color:#1a1a1a;">..</div>
<svg style="left:706px;top:550.5px" width="8" height="5" viewBox="0 0 8 5"><path d="M.5 .5L4.0 4L7.5 .5" fill="none" stroke="#555" stroke-width="1.1"/></svg>
<div style="left:691px;top:561px;width:31px;height:17px;background:#ffffb0;border-right:1px solid #949494;"></div>
<div style="left:691px;top:580px;width:30px;height:13px;background:#bfcddb;"></div>
<div class="t" style="left:693px;top:579.5px;line-height:14px;height:14px;color:#000;">11</div>
<div style="left:691px;top:594px;width:30px;height:14px;background:#fff;"></div>
<div style="left:722px;top:527px;width:49px;height:16px;background:#f0f0f0;border-left:1px solid #fff;border-top:1px solid #fff;overflow:hidden;"></div>
<div class="b" style="left:723.5px;top:528px;line-height:14px;height:14px;">Paragraf</div>
<div style="left:722px;top:545px;width:49px;height:15px;background:#e1e1e1;overflow:hidden;"></div>
<div class="t" style="left:726px;top:545.5px;line-height:14px;height:14px;color:#1a1a1a;">Začí...</div>
<svg style="left:757px;top:550.5px" width="8" height="5" viewBox="0 0 8 5"><path d="M.5 .5L4.0 4L7.5 .5" fill="none" stroke="#555" stroke-width="1.1"/></svg>
<div style="left:722px;top:561px;width:51px;height:17px;background:#ffffb0;border-right:1px solid #949494;"></div>
<div style="left:722px;top:580px;width:50px;height:13px;background:#bfcddb;"></div>
<div class="t" style="left:724px;top:579.5px;line-height:14px;height:14px;color:#000;">3399</div>
<div style="left:722px;top:594px;width:50px;height:14px;background:#fff;"></div>
<div style="left:773px;top:527px;width:46px;height:16px;background:#f0f0f0;border-left:1px solid #fff;border-top:1px solid #fff;overflow:hidden;"></div>
<div class="b" style="left:774.5px;top:528px;line-height:14px;height:14px;">Položka</div>
<div style="left:773px;top:545px;width:46px;height:15px;background:#e1e1e1;overflow:hidden;"></div>
<div class="t" style="left:777px;top:545.5px;line-height:14px;height:14px;color:#1a1a1a;">Za...</div>
<svg style="left:805px;top:550.5px" width="8" height="5" viewBox="0 0 8 5"><path d="M.5 .5L4.0 4L7.5 .5" fill="none" stroke="#555" stroke-width="1.1"/></svg>
<div style="left:773px;top:561px;width:48px;height:17px;background:#ffffb0;border-right:1px solid #949494;"></div>
<div style="left:773px;top:580px;width:47px;height:13px;background:#bfcddb;"></div>
<div class="t" style="left:775px;top:579.5px;line-height:14px;height:14px;color:#000;">5175</div>
<div style="left:773px;top:594px;width:47px;height:14px;background:#fff;"></div>
<div style="left:821px;top:527px;width:20px;height:16px;background:#f0f0f0;border-left:1px solid #fff;border-top:1px solid #fff;overflow:hidden;"></div>
<div class="b" style="left:822.5px;top:528px;line-height:14px;height:14px;"><span style="letter-spacing:-0.9px">ZJ</span></div>
<div style="left:821px;top:545px;width:20px;height:15px;background:#e1e1e1;overflow:hidden;"></div>
<svg style="left:827px;top:550.5px" width="8" height="5" viewBox="0 0 8 5"><path d="M.5 .5L4.0 4L7.5 .5" fill="none" stroke="#555" stroke-width="1.1"/></svg>
<div style="left:821px;top:561px;width:22px;height:17px;background:#ffffb0;border-right:1px solid #949494;"></div>
<div style="left:821px;top:580px;width:21px;height:13px;background:#bfcddb;"></div>
<div style="left:821px;top:594px;width:21px;height:14px;background:#fff;"></div>
<div style="left:843px;top:527px;width:44px;height:16px;background:#f0f0f0;border-left:1px solid #fff;border-top:1px solid #fff;overflow:hidden;"></div>
<div class="b" style="left:844.5px;top:528px;line-height:14px;height:14px;">Nástroj</div>
<div style="left:843px;top:545px;width:44px;height:15px;background:#e1e1e1;overflow:hidden;"></div>
<div class="t" style="left:847px;top:545.5px;line-height:14px;height:14px;color:#1a1a1a;">Za...</div>
<svg style="left:873px;top:550.5px" width="8" height="5" viewBox="0 0 8 5"><path d="M.5 .5L4.0 4L7.5 .5" fill="none" stroke="#555" stroke-width="1.1"/></svg>
<div style="left:843px;top:561px;width:46px;height:17px;background:#ffffb0;border-right:1px solid #949494;"></div>
<div style="left:843px;top:580px;width:45px;height:13px;background:#bfcddb;"></div>
<div style="left:843px;top:594px;width:45px;height:14px;background:#fff;"></div>
<div style="left:889px;top:527px;width:63px;height:16px;background:#f0f0f0;border-left:1px solid #fff;border-top:1px solid #fff;overflow:hidden;"></div>
<div class="b" style="left:890.5px;top:528px;line-height:14px;height:14px;">Prost. jedn.</div>
<div style="left:889px;top:545px;width:63px;height:15px;background:#e1e1e1;overflow:hidden;"></div>
<div class="t" style="left:893px;top:545.5px;line-height:14px;height:14px;color:#1a1a1a;">Začíná...</div>
<svg style="left:938px;top:550.5px" width="8" height="5" viewBox="0 0 8 5"><path d="M.5 .5L4.0 4L7.5 .5" fill="none" stroke="#555" stroke-width="1.1"/></svg>
<div style="left:889px;top:561px;width:65px;height:17px;background:#ffffb0;border-right:1px solid #949494;"></div>
<div style="left:889px;top:580px;width:64px;height:13px;background:#bfcddb;"></div>
<div style="left:889px;top:594px;width:64px;height:14px;background:#fff;"></div>
<div style="left:954px;top:527px;width:107px;height:16px;background:#f0f0f0;border-left:1px solid #fff;border-top:1px solid #fff;overflow:hidden;"></div>
<div class="b" style="left:955.5px;top:528px;line-height:14px;height:14px;">Organizační jedno<span style="letter-spacing:0.8px">...</span></div>
<div style="left:954px;top:545px;width:107px;height:15px;background:#e1e1e1;overflow:hidden;"></div>
<div class="t" style="left:958px;top:545.5px;line-height:14px;height:14px;color:#1a1a1a;">Začíná na</div>
<svg style="left:1047px;top:550.5px" width="8" height="5" viewBox="0 0 8 5"><path d="M.5 .5L4.0 4L7.5 .5" fill="none" stroke="#555" stroke-width="1.1"/></svg>
<div style="left:954px;top:561px;width:109px;height:17px;background:#ffffb0;border-right:1px solid #949494;"></div>
<div style="left:954px;top:580px;width:108px;height:13px;background:#bfcddb;"></div>
<div style="left:954px;top:594px;width:108px;height:14px;background:#fff;"></div>
<div style="left:1063px;top:527px;width:57px;height:16px;background:#f0f0f0;border-left:1px solid #fff;border-top:1px solid #fff;overflow:hidden;"></div>
<div class="b" style="left:1064.5px;top:528px;line-height:14px;height:14px;">Obnos <span style="letter-spacing:-0.9px">MD</span></div>
<div style="left:1063px;top:545px;width:57px;height:15px;background:#e1e1e1;overflow:hidden;"></div>
<div class="t" style="left:1067px;top:545.5px;line-height:14px;height:14px;color:#1a1a1a;">Stejné</div>
<svg style="left:1106px;top:550.5px" width="8" height="5" viewBox="0 0 8 5"><path d="M.5 .5L4.0 4L7.5 .5" fill="none" stroke="#555" stroke-width="1.1"/></svg>
<div style="left:1063px;top:561px;width:59px;height:17px;background:#ffffb0;border-right:1px solid #949494;"></div>
<div style="left:1063px;top:580px;width:58px;height:13px;background:#bfcddb;"></div>
<div class="t" style="left:1063px;top:579.5px;line-height:14px;height:14px;width:55px;text-align:right;color:#000;">0,00</div>
<div style="left:1063px;top:594px;width:58px;height:14px;background:#fff;"></div>
<div class="t" style="left:1063px;top:594px;line-height:14px;height:14px;width:55px;text-align:right;color:#000;">2 448,00</div>
<div style="left:1122px;top:527px;width:60px;height:16px;background:#f0f0f0;border-left:1px solid #fff;border-top:1px solid #fff;overflow:hidden;"></div>
<div class="b" style="left:1123.5px;top:528px;line-height:14px;height:14px;">Obnos <span style="letter-spacing:-0.9px">DAL</span></div>
<div style="left:1122px;top:545px;width:60px;height:15px;background:#e1e1e1;overflow:hidden;"></div>
<div class="t" style="left:1126px;top:545.5px;line-height:14px;height:14px;color:#1a1a1a;">Stejné</div>
<svg style="left:1168px;top:550.5px" width="8" height="5" viewBox="0 0 8 5"><path d="M.5 .5L4.0 4L7.5 .5" fill="none" stroke="#555" stroke-width="1.1"/></svg>
<div style="left:1122px;top:561px;width:62px;height:17px;background:#ffffb0;border-right:1px solid #949494;"></div>
<div style="left:1122px;top:580px;width:61px;height:13px;background:#bfcddb;"></div>
<div class="t" style="left:1122px;top:579.5px;line-height:14px;height:14px;width:58px;text-align:right;color:#000;">2 448,00</div>
<div style="left:1122px;top:594px;width:61px;height:14px;background:#fff;"></div>
<div class="t" style="left:1122px;top:594px;line-height:14px;height:14px;width:58px;text-align:right;color:#000;">0,00</div>
<div style="left:1184px;top:527px;width:83px;height:16px;background:#f0f0f0;border-left:1px solid #fff;border-top:1px solid #fff;overflow:hidden;"></div>
<div class="b" style="left:1185.5px;top:528px;line-height:14px;height:14px;">Daňová skupi<span style="letter-spacing:0.8px">...</span></div>
<div style="left:1184px;top:545px;width:83px;height:15px;background:#e1e1e1;overflow:hidden;"></div>
<div class="t" style="left:1188px;top:545.5px;line-height:14px;height:14px;color:#1a1a1a;">Stejné</div>
<svg style="left:1253px;top:550.5px" width="8" height="5" viewBox="0 0 8 5"><path d="M.5 .5L4.0 4L7.5 .5" fill="none" stroke="#555" stroke-width="1.1"/></svg>
<div style="left:1184px;top:561px;width:85px;height:17px;background:#ffffb0;border-right:1px solid #949494;"></div>
<div style="left:1184px;top:580px;width:84px;height:13px;background:#bfcddb;"></div>
<div style="left:1184px;top:594px;width:84px;height:14px;background:#fff;"></div>
<div style="left:1269px;top:527px;width:17px;height:16px;background:#f0f0f0;border-left:1px solid #fff;border-top:1px solid #fff;overflow:hidden;"></div>
<div class="b" style="left:1270.5px;top:528px;line-height:14px;height:14px;"><span style="letter-spacing:0.8px">...</span></div>
<div style="left:1269px;top:545px;width:17px;height:15px;background:#e1e1e1;overflow:hidden;"></div>
<svg style="left:1272px;top:550.5px" width="8" height="5" viewBox="0 0 8 5"><path d="M.5 .5L4.0 4L7.5 .5" fill="none" stroke="#555" stroke-width="1.1"/></svg>
<div style="left:1269px;top:561px;width:19px;height:17px;background:#ffffb0;border-right:1px solid #949494;"></div>
<div style="left:1269px;top:580px;width:18px;height:13px;background:#bfcddb;"></div>
<div style="left:1269px;top:594px;width:18px;height:14px;background:#fff;"></div>
<div style="left:1288px;top:527px;width:111px;height:16px;background:#f0f0f0;border-left:1px solid #fff;border-top:1px solid #fff;overflow:hidden;"></div>
<div class="b" style="left:1289.5px;top:528px;line-height:14px;height:14px;">Text bankovní polo<span style="letter-spacing:0.8px">...</span></div>
<div style="left:1288px;top:545px;width:111px;height:15px;background:#e1e1e1;overflow:hidden;"></div>
<div class="t" style="left:1292px;top:545.5px;line-height:14px;height:14px;color:#1a1a1a;">Začíná na</div>
<svg style="left:1385px;top:550.5px" width="8" height="5" viewBox="0 0 8 5"><path d="M.5 .5L4.0 4L7.5 .5" fill="none" stroke="#555" stroke-width="1.1"/></svg>
<div style="left:1288px;top:561px;width:113px;height:17px;background:#ffffb0;border-right:1px solid #949494;"></div>
<div style="left:1288px;top:580px;width:112px;height:13px;background:#bfcddb;"></div>
<div style="left:1288px;top:594px;width:112px;height:14px;background:#fff;"></div>
<div style="left:1401px;top:527px;width:137px;height:16px;background:#f0f0f0;border-left:1px solid #fff;border-top:1px solid #fff;overflow:hidden;"></div>
<div class="b" style="left:1402.5px;top:528px;line-height:14px;height:14px;">Účel platby pokladna</div>
<div style="left:1401px;top:545px;width:137px;height:15px;background:#e1e1e1;overflow:hidden;"></div>
<div class="t" style="left:1405px;top:545.5px;line-height:14px;height:14px;color:#1a1a1a;">Začíná na</div>
<svg style="left:1524px;top:550.5px" width="8" height="5" viewBox="0 0 8 5"><path d="M.5 .5L4.0 4L7.5 .5" fill="none" stroke="#555" stroke-width="1.1"/></svg>
<div style="left:1401px;top:561px;width:139px;height:17px;background:#ffffb0;border-right:1px solid #949494;"></div>
<div style="left:1401px;top:580px;width:138px;height:13px;background:#bfcddb;"></div>
<div class="t" style="left:1403px;top:579.5px;line-height:14px;height:14px;color:#000;">V-Pokladna výdej <span style="font-size:10.3px;letter-spacing:-0.88px">UNIVERZAL</span></div>
<div style="left:1401px;top:594px;width:138px;height:14px;background:#fff;"></div>
<div class="t" style="left:1403px;top:594px;line-height:14px;height:14px;color:#000;">V-Pokladna výdej <span style="font-size:10.3px;letter-spacing:-0.88px">UNIVERZAL</span></div>
<div style="left:1540px;top:527px;width:51px;height:16px;background:#f0f0f0;border-left:1px solid #fff;border-top:1px solid #fff;overflow:hidden;"></div>
<div class="b" style="left:1541.5px;top:528px;line-height:14px;height:14px;">Účet <span style="letter-spacing:-0.9px">PAP</span></div>
<div style="left:1540px;top:545px;width:51px;height:15px;background:#e1e1e1;overflow:hidden;"></div>
<div class="t" style="left:1544px;top:545.5px;line-height:14px;height:14px;color:#1a1a1a;">Začí...</div>
<svg style="left:1577px;top:550.5px" width="8" height="5" viewBox="0 0 8 5"><path d="M.5 .5L4.0 4L7.5 .5" fill="none" stroke="#555" stroke-width="1.1"/></svg>
<div style="left:1540px;top:561px;width:53px;height:17px;background:#ffffb0;border-right:1px solid #949494;"></div>
<div style="left:1540px;top:580px;width:52px;height:13px;background:#bfcddb;"></div>
<div class="t" style="left:1542px;top:579.5px;line-height:14px;height:14px;color:#000;">261</div>
<div style="left:1540px;top:594px;width:52px;height:14px;background:#fff;"></div>
<div style="left:1593px;top:527px;width:67px;height:16px;background:#f0f0f0;border-left:1px solid #fff;border-top:1px solid #fff;overflow:hidden;"></div>
<div class="b" style="left:1594.5px;top:528px;line-height:14px;height:14px;">Druh pohy<span style="letter-spacing:0.8px">...</span></div>
<div style="left:1593px;top:545px;width:67px;height:15px;background:#e1e1e1;overflow:hidden;"></div>
<div class="t" style="left:1597px;top:545.5px;line-height:14px;height:14px;color:#1a1a1a;">Stejné</div>
<svg style="left:1646px;top:550.5px" width="8" height="5" viewBox="0 0 8 5"><path d="M.5 .5L4.0 4L7.5 .5" fill="none" stroke="#555" stroke-width="1.1"/></svg>
<div style="left:1593px;top:561px;width:69px;height:17px;background:#ffffb0;border-right:1px solid #949494;"></div>
<div style="left:1593px;top:580px;width:68px;height:13px;background:#bfcddb;overflow:hidden;"><div class="t" style="right:1px;top:-0.5px;line-height:14px;">851</div></div>
<div style="left:1593px;top:594px;width:68px;height:14px;background:#fff;overflow:hidden;"><div class="t" style="right:-2px;top:0;line-height:14px;">0</div></div>
<div style="left:454px;top:582px;width:10px;height:10px;background:linear-gradient(135deg,#dcdcdc,#fafafa);border:1px solid #999a9a;box-shadow:inset 0 0 0 1px #f4f4f4;"></div>
<div style="left:456px;top:596px;width:10px;height:10px;background:linear-gradient(135deg,#dcdcdc,#fafafa);border:1px solid #999a9a;box-shadow:inset 0 0 0 1px #f4f4f4;"></div>
<div style="left:431px;top:609px;width:1230px;height:13px;background:#f0f0f0;"></div>
<div style="left:431px;top:622px;width:1230px;height:16px;background:#f0f0f0;"></div>
<svg style="left:436px;top:625px" width="6" height="9" viewBox="0 0 6 9"><path d="M5 .5L.5 4.5L5 8.5" fill="none" stroke="#444" stroke-width="1.5"/></svg>
<div style="left:448px;top:622px;width:782px;height:16px;background:#c9c9c9;"></div>
<svg style="left:1649px;top:625px" width="6" height="9" viewBox="0 0 6 9"><path d="M.5 .5L5 4.5L.5 8.5" fill="none" stroke="#444" stroke-width="1.5"/></svg>
<div style="left:1662px;top:527px;width:17px;height:110px;background:#f0f0f0;"></div>
<svg style="left:1666px;top:533px" width="9" height="6" viewBox="0 0 9 6"><path d="M.5 5L4.5 .5L8.5 5" fill="none" stroke="#444" stroke-width="1.4"/></svg>
<svg style="left:1666px;top:627px" width="9" height="6" viewBox="0 0 9 6"><path d="M.5 .5L4.5 5L8.5 .5" fill="none" stroke="#444" stroke-width="1.4"/></svg>
<div style="left:1663px;top:543px;width:15px;height:8px;background:#c9c9c9;"></div>
<div style="left:431px;top:638px;width:1247px;height:1px;background:#a8a8a8;"></div>
<div style="left:431px;top:639px;width:1247px;height:2px;background:#fbfbfb;"></div>
<div style="left:431px;top:641px;width:1247px;height:2px;background:linear-gradient(#c8c8c8,#707070);"></div>
<div style="left:1661px;top:527px;width:1px;height:111px;background:#a0a0a0;"></div>
<div class="b" style="left:450px;top:656px;line-height:16px;height:16px;font-size:12px;letter-spacing:-0.25px;">Účetní období</div>
<div style="left:541px;top:654px;width:101px;height:19px;background:#e7e7e7;border:1px solid #b2b2b2;"></div>
<div style="left:630px;top:654px;width:12px;height:19px;background:#9c9c9c;border:1px solid #8a8a8a;"></div>
<svg style="left:632px;top:657.5px" width="9" height="12" viewBox="0 0 9 12"><path d="M.5 .5h8v11h-8zM.5 3h8M.5 5.500h8M.5 8h8M3 3v8.500M6 3v8.500" fill="none" stroke="#bdbdbd" stroke-width=".9"/></svg>
<div class="b" style="left:544px;top:657px;line-height:14px;height:14px;font-size:12px;letter-spacing:0.3px;">07.04.2021</div>
<div class="b" style="left:661px;top:655.5px;line-height:14px;height:14px;color:#0000ff;letter-spacing:0.3px;">Nezaúčtováno</div>
<div class="t" style="left:451px;top:676.5px;line-height:14px;height:14px;">Kód souvztažnosti</div>
<div style="left:541px;top:674px;width:181px;height:19px;background:#e7e7e7;border:1px solid #b2b2b2;"></div>
<div style="left:710px;top:674px;width:12px;height:19px;background:#9c9c9c;border:1px solid #8a8a8a;"></div>
<svg style="left:713px;top:679.5px" width="7" height="9" viewBox="0 0 7 9"><path d="M3.500 0v5M1 3.500l2.500 2.500 2.500-2.500M.5 8h6" fill="none" stroke="#b6b6b6" stroke-width="1.3"/></svg>
<div class="t" style="left:544px;top:677px;line-height:14px;height:14px;">261D</div>
<div class="t" style="left:731px;top:675.5px;line-height:14px;height:14px;color:#960096;">261D</div>
<div class="t" style="left:1012px;top:695px;line-height:14px;height:14px;">Kontrola za doklad</div>
<div style="left:1662px;top:643px;width:17px;height:60px;background:#f0f0f0;"></div>
<svg style="left:1666px;top:649px" width="9" height="6" viewBox="0 0 9 6"><path d="M.5 5L4.5 .5L8.5 5" fill="none" stroke="#444" stroke-width="1.4"/></svg>
<div style="left:1663px;top:660px;width:15px;height:45px;background:#c9c9c9;"></div>
</div>
</body></html>
